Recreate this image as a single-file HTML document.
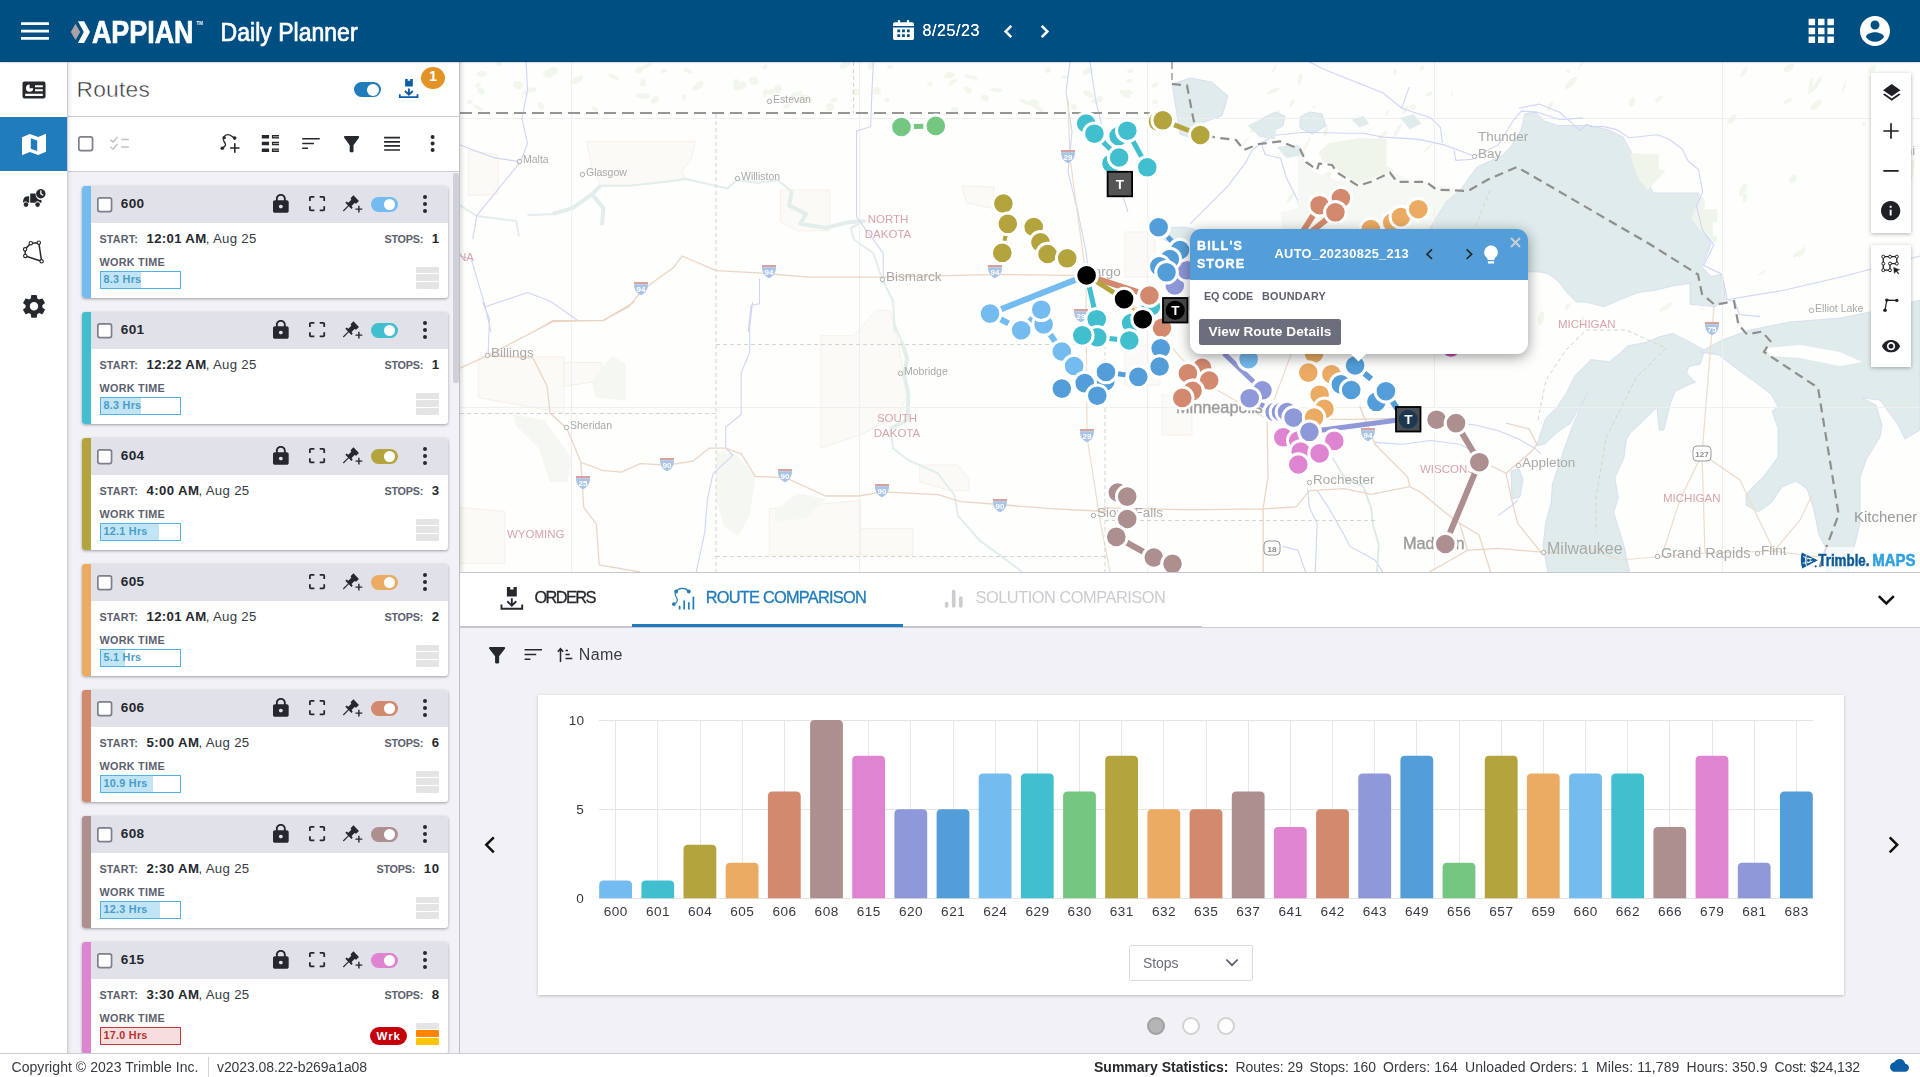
<!DOCTYPE html>
<html lang="en"><head><meta charset="utf-8"><title>Daily Planner</title>
<style>
*{box-sizing:border-box;margin:0;padding:0}
html,body{width:1920px;height:1077px;overflow:hidden;background:#f1f1f6;font-family:"Liberation Sans",sans-serif;color:#252a2e}
.abs{position:absolute}
#top{position:absolute;left:0;top:0;width:1920px;height:62px;background:#004f83;z-index:5;box-shadow:inset 0 -1px 0 #004477,0 0 2px rgba(0,0,30,.35)}
#nav{position:absolute;left:0;top:62px;width:68px;height:991px;background:#fff;border-right:1px solid #cbcdd6}
#nav .act{position:absolute;left:0;top:55px;width:67px;height:54px;background:#217cbb}
#routes{position:absolute;left:68px;top:62px;width:392px;height:991px;background:#f1f1f6;border-right:1px solid #bcbeca;overflow:hidden}
#rhead{position:absolute;left:0;top:0;width:391px;height:55px;background:#fff;border-bottom:1px solid #cbcdd6}
#rtool{position:absolute;left:0;top:55px;width:391px;height:55px;background:#fff;border-bottom:1px solid #cbcdd6}
.card{position:absolute;width:366px;height:112px;background:#fff;border-radius:3px;box-shadow:0 1px 3px rgba(0,0,0,.35);overflow:hidden}
.card .bar{position:absolute;left:0;top:0;width:9px;height:112px}
.card .hd{position:absolute;left:9px;top:0;width:357px;height:37px;background:#e0e1e9}
.cb{position:absolute;width:15px;height:15px;border:1.5px solid #7a7c8a;border-radius:2px;background:#fff}
.rid{position:absolute;left:39px;top:10px;font-weight:bold;font-size:13.6px;line-height:16px;color:#252a2e}
.lbl{position:absolute;font-size:10.6px;font-weight:bold;color:#5c5f6e;letter-spacing:.35px;line-height:12px}
.val{position:absolute;font-size:13px;line-height:16px;color:#363b42;white-space:nowrap}
.val b{color:#252a2e}
.wt{position:absolute;width:81px;height:18px;border:1px solid #4fb3e3;background:#fff}
.wt i{position:absolute;left:0;top:0;height:16px;background:#c1e5f4}
.wt span{position:absolute;left:2.6px;top:1px;font-size:10.8px;font-weight:bold;color:#4a9cc8;line-height:13px;white-space:nowrap}
.wt.red{border-color:#c23a3a;background:#f7dede}
.wt.red span{color:#b83232}
.stk{border-radius:1px;position:absolute;width:23px;background:#e4e4e4}
.tg{position:absolute;width:27px;height:15px;border-radius:8px}
.tg i{position:absolute;right:3.1px;top:2px;width:11px;height:11px;border-radius:50%;background:#fff}
#map{position:absolute;left:460px;top:62px;width:1460px;height:510px;background:#fefefd;overflow:hidden}
#bot{position:absolute;left:460px;top:573px;width:1460px;height:480px;background:#f1f1f6}
#tabs{position:absolute;left:0;top:-1px;width:1460px;height:56px;background:#fff;border-bottom:1px solid #c9cbd6;border-top:1px solid #c5c7d3}
#foot{position:absolute;left:0;top:1053px;width:1920px;height:24px;background:#fff;border-top:1px solid #cbcdd6;font-size:13.6px;color:#363b42}
svg{position:absolute;overflow:visible}
.t{position:absolute;white-space:nowrap;line-height:1}

</style></head>
<body>
<div id="top"><svg style="left:21px;top:22px" width="28" height="18" viewBox="0 0 28 18"><path fill="#fff" d="M0 .3h28v2.7H0zM0 7.7h28v2.7H0zM0 15.1h28v2.7H0z"/></svg><svg style="left:70px;top:21px" width="22" height="22" viewBox="70 21 22 22"><path fill="#aea3a3" d="M70.8 31.9l4.7-8.1 4.7 8.1-4.7 8.1z"/><path fill="#fff" d="M77.9 21.2h6.2l5.9 10.9-5.9 10.9h-6.2l5.9-10.9z"/></svg><svg style="left:0;top:0" width="420" height="62"><text x="91.900" y="42.700" font-family="Liberation Sans,sans-serif" font-weight="bold" font-size="31.200" fill="#fff" stroke="#fff" stroke-width=".7" textLength="101.600" lengthAdjust="spacingAndGlyphs">APPIAN</text><text x="196.5" y="24.6" font-family="Liberation Sans,sans-serif" font-weight="bold" font-size="4.6" fill="#fff" textLength="6.6" lengthAdjust="spacingAndGlyphs">TM</text><text x="220.600" y="40.600" font-family="Liberation Sans,sans-serif" font-size="24.9" fill="#fff" stroke="#fff" stroke-width=".7" textLength="137" lengthAdjust="spacingAndGlyphs">Daily Planner</text></svg><svg style="left:893px;top:20px" width="21" height="20" viewBox="0 0 21 20"><path fill="#fff" fill-rule="evenodd" d="M1.8 2.2h3V.6c0-.4.3-.6.7-.6h.9c.4 0 .7.2.7.6v1.6h6.8V.6c0-.4.3-.6.7-.6h.9c.4 0 .7.2.7.6v1.6h3c1 0 1.800.8 1.800 1.800V6H0V4c0-1 .8-1.800 1.800-1.800zM0 7.400h21V18.200c0 1-.8 1.800-1.800 1.800H1.800C.8 20 0 19.200 0 18.200zM4.300 9.600v2.700h2.800V9.600zm4.800 0v2.700h2.800V9.600zm4.800 0v2.700h2.800V9.600zM4.300 14.200v2.700h2.800v-2.700zm4.800 0v2.700h2.800v-2.700zm4.800 0v2.700h2.800v-2.700z"/></svg><span class="t" style="left:922.6px;top:23.1px;font-size:16.00px;color:#fff;letter-spacing:0.588px;text-shadow:0 0 .6px #fff;">8/25/23</span><svg style="left:1000px;top:20px" width="60" height="24" viewBox="1000 20 60 24"><path fill="none" stroke="#fff" stroke-width="2.5" d="M1011.3 25.900l-5.700 5.600 5.700 5.600M1041.700 25.900l5.700 5.600-5.700 5.600"/></svg><svg style="left:1800px;top:10px" width="40" height="40" viewBox="1800 10 40 40"><path fill="#fff" d="M1808.6 18.8h6.5v6.5h-6.5zM1818.0 18.8h6.5v6.5h-6.5zM1827.4 18.8h6.5v6.5h-6.5zM1808.6 27.7h6.5v6.5h-6.5zM1818.0 27.7h6.5v6.5h-6.5zM1827.4 27.7h6.5v6.5h-6.5zM1808.6 36.6h6.5v6.5h-6.5zM1818.0 36.6h6.5v6.5h-6.5zM1827.4 36.6h6.5v6.5h-6.5z"/></svg><svg style="left:1857.1px;top:12.9px" width="36.0" height="36.0" viewBox="0 0 24 24" preserveAspectRatio="none"><path fill="#fff" d="M12 2C6.48 2 2 6.48 2 12s4.48 10 10 10 10-4.48 10-10S17.52 2 12 2zm0 3c1.66 0 3 1.34 3 3s-1.34 3-3 3-3-1.34-3-3 1.34-3 3-3zm0 14.2c-2.5 0-4.71-1.28-6-3.22.03-1.99 4-3.08 6-3.08 1.99 0 5.97 1.09 6 3.08-1.29 1.94-3.5 3.22-6 3.22z" /></svg></div>
<div id="nav"><div class="act"></div></div><svg style="left:22px;top:81px" width="24" height="19" viewBox="0 0 24 19"><path fill="#25292e" fill-rule="evenodd" d="M2.400 .5h19.200c1.100 0 1.900.8 1.900 1.900v13.200c0 1.100-.8 1.900-1.900 1.900H2.400c-1.100 0-1.900-.8-1.900-1.900V2.400C.5 1.300 1.300.5 2.400.5zM3.200 12.700v2.200h17.600v-2.200zM13 4.200v2.100h7.800V4.200zM13 8.200v2.100h7.800V8.200zM7.600 3.600a3.600 3.600 0 1 0 3.600 3.600H7.600z"/></svg><svg style="left:22px;top:133px" width="24" height="23" viewBox="0 0 24 23"><path fill="#fff" fill-rule="evenodd" d="M0 4.300L7.800 1l8.400 3L24 .7v18L16.200 22l-8.400-3L0 22.300zM8.800 5.300v10.400l6.400 2.300V7.600z"/></svg><svg style="left:22px;top:189px" width="24" height="19" viewBox="0 0 24 19"><path fill="#25292e" d="M1 13.500c0-3.500 1.500-6.300 4.600-6.300h1.600v6.600H5.900a2.600 2.600 0 0 0-4.600 0zM8.200 4.600h5.400a5.800 5.800 0 0 0 5.900 6.500v2.700h-1.500a2.600 2.600 0 0 0-4.700 0H8.200z"/><circle cx="4" cy="15.600" r="2.300" fill="#25292e"/><circle cx="15.600" cy="15.600" r="2.300" fill="#25292e"/><path fill="#25292e" fill-rule="evenodd" d="M18.800 0a4.700 4.700 0 1 0 .01 0zM18.200 1.600h1.300v3l2 1.200-.6 1-2.700-1.500z"/></svg><svg style="left:22px;top:240px" width="25" height="25" viewBox="0 0 25 25"><path fill="none" stroke="#25292e" stroke-width="1.500" d="M8.800 3.200l8-.5 2.800 18.600-16.300-5.400-.2-6.600z"/><g fill="#fff" stroke="#25292e" stroke-width="1.100"><circle cx="8.800" cy="3.200" r="1.700"/><circle cx="16.800" cy="2.700" r="1.700"/><circle cx="19.600" cy="21.300" r="1.700"/><circle cx="3.300" cy="15.900" r="1.700"/><circle cx="3.100" cy="9.300" r="1.700"/></g></svg><svg style="left:23.0px;top:295.3px" width="22.0" height="22.7" viewBox="2.6 2.4 18.8 19.2" preserveAspectRatio="none"><path fill="#25292e" d="M19.14 12.94c.04-.3.06-.61.06-.94 0-.32-.02-.64-.07-.94l2.03-1.58c.18-.14.23-.41.12-.61l-1.92-3.32c-.12-.22-.37-.29-.59-.22l-2.39.96c-.5-.38-1.03-.7-1.62-.94l-.36-2.54c-.04-.24-.24-.41-.48-.41h-3.84c-.24 0-.43.17-.47.41l-.36 2.54c-.59.24-1.13.57-1.62.94l-2.39-.96c-.22-.08-.47 0-.59.22L2.74 8.87c-.12.21-.08.47.12.61l2.03 1.58c-.05.3-.09.63-.09.94s.02.64.07.94l-2.03 1.58c-.18.14-.23.41-.12.61l1.92 3.32c.12.22.37.29.59.22l2.39-.96c.5.38 1.03.7 1.62.94l.36 2.54c.05.24.24.41.48.41h3.84c.24 0 .44-.17.47-.41l.36-2.54c.59-.24 1.13-.56 1.62-.94l2.39.96c.22.08.47 0 .59-.22l1.92-3.32c.12-.22.07-.47-.12-.61l-2.01-1.58zM12 15.6c-1.98 0-3.6-1.62-3.6-3.6s1.62-3.6 3.6-3.6 3.6 1.62 3.6 3.6-1.62 3.6-3.6 3.6z" /></svg><div id="routes"><div id="rhead"></div><div id="rtool"></div><div class="abs" style="left:385.2px;top:110.5px;width:5.8px;height:210px;border-radius:2.5px;background:#cfd0d8"></div></div><div class="abs" style="left:68px;top:62px;width:4px;height:991px;background:linear-gradient(90deg,rgba(0,0,20,.07),rgba(0,0,0,0))"></div><span class="t" style="left:76.5px;top:78.2px;font-size:22.80px;color:#2f3338;letter-spacing:0.210px;-webkit-text-stroke:.5px #fff;">Routes</span><div class="tg" style="left:354px;top:82px;background:#217cbb"><i style="width:12px;height:12px;top:1.500px;right:2px"></i></div><svg style="left:398px;top:78px" width="22" height="22" viewBox="398 78 22 22"><path fill="#0b5ea6" d="M405.100 78.900h2.600v1.800h2.500v-1.800h2.600v7.600h-7.700z"/><path fill="none" stroke="#0b5ea6" stroke-width="1.800" d="M408.900 88.600v5.800M405 91l3.900 3.700 3.900-3.700M399.800 94.200v2.900h17.700v-2.900"/></svg><div class="abs" style="left:421px;top:66.900px;width:24px;height:22px;border-radius:50%;background:#e39325"></div><span class="t" style="left:428.9px;top:69.4px;font-size:14.50px;font-weight:bold;color:#fff;">1</span><svg style="left:78.1px;top:136.2px" width="16" height="16" viewBox="0 0 16 16"><rect x=".85" y=".85" width="13.700" height="13.700" rx="2" fill="#fff" stroke="#7d7f8d" stroke-width="1.700"/></svg><svg style="left:110px;top:136px" width="20" height="15" viewBox="110 136 20 15"><path fill="none" stroke="#c4c4c8" stroke-width="1.500" d="M110.400 139.600l2.600 2.500 4.600-5.200M110.400 146.700l2.600 2.500 4.600-5.200M121.200 139.600h7.700M121.200 147h7.700"/></svg><svg style="left:220px;top:134px" width="21" height="20" viewBox="220 134 21 20"><path fill="none" stroke="#25292e" stroke-width="1.300" d="M222.500 148c4-2 3.500-4 1.500-6.500s0-7 4-6.800c3 .2 4.500 2.300 6.300 3.300"/><circle cx="222.300" cy="148.300" r="1.800" fill="#25292e"/><circle cx="224.200" cy="137.600" r="1.700" fill="#25292e"/><circle cx="234.700" cy="138.100" r="1.800" fill="#25292e"/><path fill="none" stroke="#25292e" stroke-width="1.600" d="M234.800 143.300v9.400M230.100 148h9.400"/></svg><svg style="left:261px;top:134px" width="19" height="19" viewBox="261 134 19 19"><path fill="#25292e" d="M261.800 135.00h7.300v3.500h-7.300zM271.900 135.00h7.100v3.500h-7.100zM261.800 141.75h7.300v3.500h-7.300zM271.900 141.75h7.100v3.500h-7.100zM261.800 148.50h7.300v3.500h-7.300zM271.900 148.50h7.100v3.500h-7.100z"/><path stroke="#fff" stroke-width=".600" d="M273 136.700h6M273 143.500h6M273 150.200h6"/></svg><svg style="left:302px;top:137px" width="19" height="13" viewBox="302 137 19 13"><path fill="none" stroke="#25292e" stroke-width="1.500" d="M302.200 138.800h17.600M302.200 143.500h11.700M302.200 148.200h5.900"/></svg><svg style="left:343.9px;top:136.0px" width="15.2" height="16.2" viewBox="4.03 4 15.93 16" preserveAspectRatio="none"><path fill="#25292e" d="M4.25 5.61C6.27 8.2 10 13 10 13v6c0 .55.45 1 1 1h2c.55 0 1-.45 1-1v-6s3.72-4.8 5.74-7.39A.998.998 0 0 0 18.95 4H5.04c-.83 0-1.3.95-.79 1.61z" /></svg><svg style="left:384px;top:136px" width="16" height="15" viewBox="384 136 16 15"><path fill="none" stroke="#25292e" stroke-width="1.700" d="M384.100 137.700h15.900M384.100 141.800h15.900M384.100 145.900h15.900M384.100 150h15.900" transform="translate(0,0)"/></svg><svg style="left:428px;top:134px" width="9" height="19" viewBox="428 134 9 19"><g fill="#25292e"><circle cx="432.600" cy="136.900" r="2"/><circle cx="432.600" cy="143.400" r="2"/><circle cx="432.600" cy="150" r="2"/></g></svg><div class="card" style="left:82px;top:186px"><div class="bar" style="background:#74bbf0"></div><div class="hd"></div></div><svg style="left:97.3px;top:197.1px" width="16" height="16" viewBox="0 0 16 16"><rect x=".85" y=".85" width="13.700" height="13.700" rx="2" fill="#fff" stroke="#7d7f8d" stroke-width="1.700"/></svg><span class="t" style="left:120.8px;top:197.4px;font-size:13.60px;font-weight:bold;color:#25292e;letter-spacing:0.303px;">600</span><svg style="left:273.0px;top:194.0px" width="15.7" height="18.8" viewBox="4 1 16 21" preserveAspectRatio="none"><path fill="#25292e" d="M18 8h-1V6c0-2.76-2.24-5-5-5S7 3.24 7 6v2H6c-1.1 0-2 .9-2 2v10c0 1.1.9 2 2 2h12c1.1 0 2-.9 2-2V10c0-1.1-.9-2-2-2zm-6 9c-1.1 0-2-.9-2-2s.9-2 2-2 2 .9 2 2-.9 2-2 2zm3.1-9H8.9V6c0-1.71 1.39-3.1 3.1-3.1 1.71 0 3.1 1.39 3.1 3.1v2z" /></svg><svg style="left:308.9px;top:196.0px" width="16.1" height="15.2" viewBox="3 3 18 18" preserveAspectRatio="none"><path fill="#25292e" d="M3 5v4h2V5h4V3H5c-1.1 0-2 .9-2 2zm2 10H3v4c0 1.1.9 2 2 2h4v-2H5v-4zm14 4h-4v2h4c1.1 0 2-.9 2-2v-4h-2v4zm0-16h-4v2h4v4h2V5c0-1.1-.9-2-2-2z" /></svg><svg style="left:343px;top:195px" width="21" height="19" viewBox="343 195 21 19"><path fill="#25292e" d="M343.69 211.39 348.78 206.30 351.43 208.95 352.70 207.68 351.57 205.98 354.54 203.01 356.10 203.72 358.93 200.89 353.41 195.37 350.58 198.20 351.29 199.76 348.32 202.73 346.62 201.60 345.35 202.87 348.00 205.52 342.91 210.61z"/><path fill="none" stroke="#25292e" stroke-width="1.4" d="M358.9 205.7v6.8M355.5 209.1h6.8"/></svg><div class="tg" style="left:371px;top:197px;background:#74bbf0"><i></i></div><svg style="left:421px;top:194px" width="9" height="19" viewBox="421 194 9 19"><g fill="#25292e"><circle cx="425" cy="196.900" r="2"/><circle cx="425" cy="204" r="2"/><circle cx="425" cy="211.100" r="2"/></g></svg><span class="t" style="left:99.5px;top:233.6px;font-size:10.80px;font-weight:bold;color:#5c5f6e;letter-spacing:0.151px;">START:</span><span class="t" style="left:146.5px;top:231.5px;font-size:13.20px;font-weight:bold;color:#25292e;letter-spacing:0.317px;">12:01 AM</span><span class="t" style="left:205.7px;top:231.5px;font-size:13.20px;color:#363b42;letter-spacing:0.320px;">, Aug 25</span><span class="t" style="left:431.8px;top:231.5px;font-size:13.20px;font-weight:bold;color:#25292e;letter-spacing:0.600px;">1</span><span class="t" style="left:384.4px;top:233.6px;font-size:10.80px;font-weight:bold;color:#5c5f6e;letter-spacing:-0.202px;">STOPS:</span><span class="t" style="left:99.5px;top:256.8px;font-size:10.80px;font-weight:bold;color:#5c5f6e;letter-spacing:0.279px;">WORK TIME</span><div class="wt" style="left:100px;top:271px"><i style="width:39.5px"></i><span style="letter-spacing:.25px">8.3 Hrs</span></div><div class="stk" style="left:416px;top:267px;height:6px"></div><div class="stk" style="left:416px;top:274px;height:7px"></div><div class="stk" style="left:416px;top:282px;height:7px"></div><div class="card" style="left:82px;top:312px"><div class="bar" style="background:#41bfce"></div><div class="hd"></div></div><svg style="left:97.3px;top:323.1px" width="16" height="16" viewBox="0 0 16 16"><rect x=".85" y=".85" width="13.700" height="13.700" rx="2" fill="#fff" stroke="#7d7f8d" stroke-width="1.700"/></svg><span class="t" style="left:120.8px;top:323.4px;font-size:13.60px;font-weight:bold;color:#25292e;letter-spacing:0.303px;">601</span><svg style="left:273.0px;top:320.0px" width="15.7" height="18.8" viewBox="4 1 16 21" preserveAspectRatio="none"><path fill="#25292e" d="M18 8h-1V6c0-2.76-2.24-5-5-5S7 3.24 7 6v2H6c-1.1 0-2 .9-2 2v10c0 1.1.9 2 2 2h12c1.1 0 2-.9 2-2V10c0-1.1-.9-2-2-2zm-6 9c-1.1 0-2-.9-2-2s.9-2 2-2 2 .9 2 2-.9 2-2 2zm3.1-9H8.9V6c0-1.71 1.39-3.1 3.1-3.1 1.71 0 3.1 1.39 3.1 3.1v2z" /></svg><svg style="left:308.9px;top:322.0px" width="16.1" height="15.2" viewBox="3 3 18 18" preserveAspectRatio="none"><path fill="#25292e" d="M3 5v4h2V5h4V3H5c-1.1 0-2 .9-2 2zm2 10H3v4c0 1.1.9 2 2 2h4v-2H5v-4zm14 4h-4v2h4c1.1 0 2-.9 2-2v-4h-2v4zm0-16h-4v2h4v4h2V5c0-1.1-.9-2-2-2z" /></svg><svg style="left:343px;top:321px" width="21" height="19" viewBox="343 195 21 19"><path fill="#25292e" d="M343.69 211.39 348.78 206.30 351.43 208.95 352.70 207.68 351.57 205.98 354.54 203.01 356.10 203.72 358.93 200.89 353.41 195.37 350.58 198.20 351.29 199.76 348.32 202.73 346.62 201.60 345.35 202.87 348.00 205.52 342.91 210.61z"/><path fill="none" stroke="#25292e" stroke-width="1.4" d="M358.9 205.7v6.8M355.5 209.1h6.8"/></svg><div class="tg" style="left:371px;top:323px;background:#41bfce"><i></i></div><svg style="left:421px;top:320px" width="9" height="19" viewBox="421 194 9 19"><g fill="#25292e"><circle cx="425" cy="196.900" r="2"/><circle cx="425" cy="204" r="2"/><circle cx="425" cy="211.100" r="2"/></g></svg><span class="t" style="left:99.5px;top:359.6px;font-size:10.80px;font-weight:bold;color:#5c5f6e;letter-spacing:0.151px;">START:</span><span class="t" style="left:146.5px;top:357.5px;font-size:13.20px;font-weight:bold;color:#25292e;letter-spacing:0.317px;">12:22 AM</span><span class="t" style="left:205.7px;top:357.5px;font-size:13.20px;color:#363b42;letter-spacing:0.320px;">, Aug 25</span><span class="t" style="left:431.8px;top:357.5px;font-size:13.20px;font-weight:bold;color:#25292e;letter-spacing:0.600px;">1</span><span class="t" style="left:384.4px;top:359.6px;font-size:10.80px;font-weight:bold;color:#5c5f6e;letter-spacing:-0.202px;">STOPS:</span><span class="t" style="left:99.5px;top:382.8px;font-size:10.80px;font-weight:bold;color:#5c5f6e;letter-spacing:0.279px;">WORK TIME</span><div class="wt" style="left:100px;top:397px"><i style="width:39.5px"></i><span style="letter-spacing:.25px">8.3 Hrs</span></div><div class="stk" style="left:416px;top:393px;height:6px"></div><div class="stk" style="left:416px;top:400px;height:7px"></div><div class="stk" style="left:416px;top:408px;height:7px"></div><div class="card" style="left:82px;top:438px"><div class="bar" style="background:#b3a43e"></div><div class="hd"></div></div><svg style="left:97.3px;top:449.1px" width="16" height="16" viewBox="0 0 16 16"><rect x=".85" y=".85" width="13.700" height="13.700" rx="2" fill="#fff" stroke="#7d7f8d" stroke-width="1.700"/></svg><span class="t" style="left:120.8px;top:449.4px;font-size:13.60px;font-weight:bold;color:#25292e;letter-spacing:0.303px;">604</span><svg style="left:273.0px;top:446.0px" width="15.7" height="18.8" viewBox="4 1 16 21" preserveAspectRatio="none"><path fill="#25292e" d="M18 8h-1V6c0-2.76-2.24-5-5-5S7 3.24 7 6v2H6c-1.1 0-2 .9-2 2v10c0 1.1.9 2 2 2h12c1.1 0 2-.9 2-2V10c0-1.1-.9-2-2-2zm-6 9c-1.1 0-2-.9-2-2s.9-2 2-2 2 .9 2 2-.9 2-2 2zm3.1-9H8.9V6c0-1.71 1.39-3.1 3.1-3.1 1.71 0 3.1 1.39 3.1 3.1v2z" /></svg><svg style="left:308.9px;top:448.0px" width="16.1" height="15.2" viewBox="3 3 18 18" preserveAspectRatio="none"><path fill="#25292e" d="M3 5v4h2V5h4V3H5c-1.1 0-2 .9-2 2zm2 10H3v4c0 1.1.9 2 2 2h4v-2H5v-4zm14 4h-4v2h4c1.1 0 2-.9 2-2v-4h-2v4zm0-16h-4v2h4v4h2V5c0-1.1-.9-2-2-2z" /></svg><svg style="left:343px;top:447px" width="21" height="19" viewBox="343 195 21 19"><path fill="#25292e" d="M343.69 211.39 348.78 206.30 351.43 208.95 352.70 207.68 351.57 205.98 354.54 203.01 356.10 203.72 358.93 200.89 353.41 195.37 350.58 198.20 351.29 199.76 348.32 202.73 346.62 201.60 345.35 202.87 348.00 205.52 342.91 210.61z"/><path fill="none" stroke="#25292e" stroke-width="1.4" d="M358.9 205.7v6.8M355.5 209.1h6.8"/></svg><div class="tg" style="left:371px;top:449px;background:#b3a43e"><i></i></div><svg style="left:421px;top:446px" width="9" height="19" viewBox="421 194 9 19"><g fill="#25292e"><circle cx="425" cy="196.900" r="2"/><circle cx="425" cy="204" r="2"/><circle cx="425" cy="211.100" r="2"/></g></svg><span class="t" style="left:99.5px;top:485.6px;font-size:10.80px;font-weight:bold;color:#5c5f6e;letter-spacing:0.151px;">START:</span><span class="t" style="left:146.5px;top:483.5px;font-size:13.20px;font-weight:bold;color:#25292e;letter-spacing:0.382px;">4:00 AM</span><span class="t" style="left:198.5px;top:483.5px;font-size:13.20px;color:#363b42;letter-spacing:0.320px;">, Aug 25</span><span class="t" style="left:431.8px;top:483.5px;font-size:13.20px;font-weight:bold;color:#25292e;letter-spacing:0.600px;">3</span><span class="t" style="left:384.4px;top:485.6px;font-size:10.80px;font-weight:bold;color:#5c5f6e;letter-spacing:-0.202px;">STOPS:</span><span class="t" style="left:99.5px;top:508.8px;font-size:10.80px;font-weight:bold;color:#5c5f6e;letter-spacing:0.279px;">WORK TIME</span><div class="wt" style="left:100px;top:523px"><i style="width:57.6px"></i><span style="letter-spacing:.25px">12.1 Hrs</span></div><div class="stk" style="left:416px;top:519px;height:6px"></div><div class="stk" style="left:416px;top:526px;height:7px"></div><div class="stk" style="left:416px;top:534px;height:7px"></div><div class="card" style="left:82px;top:564px"><div class="bar" style="background:#ebab63"></div><div class="hd"></div></div><svg style="left:97.3px;top:575.1px" width="16" height="16" viewBox="0 0 16 16"><rect x=".85" y=".85" width="13.700" height="13.700" rx="2" fill="#fff" stroke="#7d7f8d" stroke-width="1.700"/></svg><span class="t" style="left:120.8px;top:575.4px;font-size:13.60px;font-weight:bold;color:#25292e;letter-spacing:0.303px;">605</span><svg style="left:308.9px;top:574.0px" width="16.1" height="15.2" viewBox="3 3 18 18" preserveAspectRatio="none"><path fill="#25292e" d="M3 5v4h2V5h4V3H5c-1.1 0-2 .9-2 2zm2 10H3v4c0 1.1.9 2 2 2h4v-2H5v-4zm14 4h-4v2h4c1.1 0 2-.9 2-2v-4h-2v4zm0-16h-4v2h4v4h2V5c0-1.1-.9-2-2-2z" /></svg><svg style="left:343px;top:573px" width="21" height="19" viewBox="343 195 21 19"><path fill="#25292e" d="M343.69 211.39 348.78 206.30 351.43 208.95 352.70 207.68 351.57 205.98 354.54 203.01 356.10 203.72 358.93 200.89 353.41 195.37 350.58 198.20 351.29 199.76 348.32 202.73 346.62 201.60 345.35 202.87 348.00 205.52 342.91 210.61z"/><path fill="none" stroke="#25292e" stroke-width="1.4" d="M358.9 205.7v6.8M355.5 209.1h6.8"/></svg><div class="tg" style="left:371px;top:575px;background:#ebab63"><i></i></div><svg style="left:421px;top:572px" width="9" height="19" viewBox="421 194 9 19"><g fill="#25292e"><circle cx="425" cy="196.900" r="2"/><circle cx="425" cy="204" r="2"/><circle cx="425" cy="211.100" r="2"/></g></svg><span class="t" style="left:99.5px;top:611.6px;font-size:10.80px;font-weight:bold;color:#5c5f6e;letter-spacing:0.151px;">START:</span><span class="t" style="left:146.5px;top:609.5px;font-size:13.20px;font-weight:bold;color:#25292e;letter-spacing:0.317px;">12:01 AM</span><span class="t" style="left:205.7px;top:609.5px;font-size:13.20px;color:#363b42;letter-spacing:0.320px;">, Aug 25</span><span class="t" style="left:431.8px;top:609.5px;font-size:13.20px;font-weight:bold;color:#25292e;letter-spacing:0.600px;">2</span><span class="t" style="left:384.4px;top:611.6px;font-size:10.80px;font-weight:bold;color:#5c5f6e;letter-spacing:-0.202px;">STOPS:</span><span class="t" style="left:99.5px;top:634.8px;font-size:10.80px;font-weight:bold;color:#5c5f6e;letter-spacing:0.279px;">WORK TIME</span><div class="wt" style="left:100px;top:649px"><i style="width:24.3px"></i><span style="letter-spacing:.25px">5.1 Hrs</span></div><div class="stk" style="left:416px;top:645px;height:6px"></div><div class="stk" style="left:416px;top:652px;height:7px"></div><div class="stk" style="left:416px;top:660px;height:7px"></div><div class="card" style="left:82px;top:690px"><div class="bar" style="background:#d2896d"></div><div class="hd"></div></div><svg style="left:97.3px;top:701.1px" width="16" height="16" viewBox="0 0 16 16"><rect x=".85" y=".85" width="13.700" height="13.700" rx="2" fill="#fff" stroke="#7d7f8d" stroke-width="1.700"/></svg><span class="t" style="left:120.8px;top:701.4px;font-size:13.60px;font-weight:bold;color:#25292e;letter-spacing:0.303px;">606</span><svg style="left:273.0px;top:698.0px" width="15.7" height="18.8" viewBox="4 1 16 21" preserveAspectRatio="none"><path fill="#25292e" d="M18 8h-1V6c0-2.76-2.24-5-5-5S7 3.24 7 6v2H6c-1.1 0-2 .9-2 2v10c0 1.1.9 2 2 2h12c1.1 0 2-.9 2-2V10c0-1.1-.9-2-2-2zm-6 9c-1.1 0-2-.9-2-2s.9-2 2-2 2 .9 2 2-.9 2-2 2zm3.1-9H8.9V6c0-1.71 1.39-3.1 3.1-3.1 1.71 0 3.1 1.39 3.1 3.1v2z" /></svg><svg style="left:308.9px;top:700.0px" width="16.1" height="15.2" viewBox="3 3 18 18" preserveAspectRatio="none"><path fill="#25292e" d="M3 5v4h2V5h4V3H5c-1.1 0-2 .9-2 2zm2 10H3v4c0 1.1.9 2 2 2h4v-2H5v-4zm14 4h-4v2h4c1.1 0 2-.9 2-2v-4h-2v4zm0-16h-4v2h4v4h2V5c0-1.1-.9-2-2-2z" /></svg><svg style="left:343px;top:699px" width="21" height="19" viewBox="343 195 21 19"><path fill="#25292e" d="M343.69 211.39 348.78 206.30 351.43 208.95 352.70 207.68 351.57 205.98 354.54 203.01 356.10 203.72 358.93 200.89 353.41 195.37 350.58 198.20 351.29 199.76 348.32 202.73 346.62 201.60 345.35 202.87 348.00 205.52 342.91 210.61z"/><path fill="none" stroke="#25292e" stroke-width="1.4" d="M358.9 205.7v6.8M355.5 209.1h6.8"/></svg><div class="tg" style="left:371px;top:701px;background:#d2896d"><i></i></div><svg style="left:421px;top:698px" width="9" height="19" viewBox="421 194 9 19"><g fill="#25292e"><circle cx="425" cy="196.900" r="2"/><circle cx="425" cy="204" r="2"/><circle cx="425" cy="211.100" r="2"/></g></svg><span class="t" style="left:99.5px;top:737.6px;font-size:10.80px;font-weight:bold;color:#5c5f6e;letter-spacing:0.151px;">START:</span><span class="t" style="left:146.5px;top:735.5px;font-size:13.20px;font-weight:bold;color:#25292e;letter-spacing:0.382px;">5:00 AM</span><span class="t" style="left:198.5px;top:735.5px;font-size:13.20px;color:#363b42;letter-spacing:0.320px;">, Aug 25</span><span class="t" style="left:431.8px;top:735.5px;font-size:13.20px;font-weight:bold;color:#25292e;letter-spacing:0.600px;">6</span><span class="t" style="left:384.4px;top:737.6px;font-size:10.80px;font-weight:bold;color:#5c5f6e;letter-spacing:-0.202px;">STOPS:</span><span class="t" style="left:99.5px;top:760.8px;font-size:10.80px;font-weight:bold;color:#5c5f6e;letter-spacing:0.279px;">WORK TIME</span><div class="wt" style="left:100px;top:775px"><i style="width:51.9px"></i><span style="letter-spacing:.25px">10.9 Hrs</span></div><div class="stk" style="left:416px;top:771px;height:6px"></div><div class="stk" style="left:416px;top:778px;height:7px"></div><div class="stk" style="left:416px;top:786px;height:7px"></div><div class="card" style="left:82px;top:816px"><div class="bar" style="background:#ae8f8f"></div><div class="hd"></div></div><svg style="left:97.3px;top:827.1px" width="16" height="16" viewBox="0 0 16 16"><rect x=".85" y=".85" width="13.700" height="13.700" rx="2" fill="#fff" stroke="#7d7f8d" stroke-width="1.700"/></svg><span class="t" style="left:120.8px;top:827.4px;font-size:13.60px;font-weight:bold;color:#25292e;letter-spacing:0.303px;">608</span><svg style="left:273.0px;top:824.0px" width="15.7" height="18.8" viewBox="4 1 16 21" preserveAspectRatio="none"><path fill="#25292e" d="M18 8h-1V6c0-2.76-2.24-5-5-5S7 3.24 7 6v2H6c-1.1 0-2 .9-2 2v10c0 1.1.9 2 2 2h12c1.1 0 2-.9 2-2V10c0-1.1-.9-2-2-2zm-6 9c-1.1 0-2-.9-2-2s.9-2 2-2 2 .9 2 2-.9 2-2 2zm3.1-9H8.9V6c0-1.71 1.39-3.1 3.1-3.1 1.71 0 3.1 1.39 3.1 3.1v2z" /></svg><svg style="left:308.9px;top:826.0px" width="16.1" height="15.2" viewBox="3 3 18 18" preserveAspectRatio="none"><path fill="#25292e" d="M3 5v4h2V5h4V3H5c-1.1 0-2 .9-2 2zm2 10H3v4c0 1.1.9 2 2 2h4v-2H5v-4zm14 4h-4v2h4c1.1 0 2-.9 2-2v-4h-2v4zm0-16h-4v2h4v4h2V5c0-1.1-.9-2-2-2z" /></svg><svg style="left:343px;top:825px" width="21" height="19" viewBox="343 195 21 19"><path fill="#25292e" d="M343.69 211.39 348.78 206.30 351.43 208.95 352.70 207.68 351.57 205.98 354.54 203.01 356.10 203.72 358.93 200.89 353.41 195.37 350.58 198.20 351.29 199.76 348.32 202.73 346.62 201.60 345.35 202.87 348.00 205.52 342.91 210.61z"/><path fill="none" stroke="#25292e" stroke-width="1.4" d="M358.9 205.7v6.8M355.5 209.1h6.8"/></svg><div class="tg" style="left:371px;top:827px;background:#ae8f8f"><i></i></div><svg style="left:421px;top:824px" width="9" height="19" viewBox="421 194 9 19"><g fill="#25292e"><circle cx="425" cy="196.900" r="2"/><circle cx="425" cy="204" r="2"/><circle cx="425" cy="211.100" r="2"/></g></svg><span class="t" style="left:99.5px;top:863.6px;font-size:10.80px;font-weight:bold;color:#5c5f6e;letter-spacing:0.151px;">START:</span><span class="t" style="left:146.5px;top:861.5px;font-size:13.20px;font-weight:bold;color:#25292e;letter-spacing:0.382px;">2:30 AM</span><span class="t" style="left:198.5px;top:861.5px;font-size:13.20px;color:#363b42;letter-spacing:0.320px;">, Aug 25</span><span class="t" style="left:423.8px;top:861.5px;font-size:13.20px;font-weight:bold;color:#25292e;letter-spacing:0.600px;">10</span><span class="t" style="left:376.4px;top:863.6px;font-size:10.80px;font-weight:bold;color:#5c5f6e;letter-spacing:-0.202px;">STOPS:</span><span class="t" style="left:99.5px;top:886.8px;font-size:10.80px;font-weight:bold;color:#5c5f6e;letter-spacing:0.279px;">WORK TIME</span><div class="wt" style="left:100px;top:901px"><i style="width:58.5px"></i><span style="letter-spacing:.25px">12.3 Hrs</span></div><div class="stk" style="left:416px;top:897px;height:6px"></div><div class="stk" style="left:416px;top:904px;height:7px"></div><div class="stk" style="left:416px;top:912px;height:7px"></div><div class="card" style="left:82px;top:942px"><div class="bar" style="background:#df84d1"></div><div class="hd"></div></div><svg style="left:97.3px;top:953.1px" width="16" height="16" viewBox="0 0 16 16"><rect x=".85" y=".85" width="13.700" height="13.700" rx="2" fill="#fff" stroke="#7d7f8d" stroke-width="1.700"/></svg><span class="t" style="left:120.8px;top:953.4px;font-size:13.60px;font-weight:bold;color:#25292e;letter-spacing:0.303px;">615</span><svg style="left:273.0px;top:950.0px" width="15.7" height="18.8" viewBox="4 1 16 21" preserveAspectRatio="none"><path fill="#25292e" d="M18 8h-1V6c0-2.76-2.24-5-5-5S7 3.24 7 6v2H6c-1.1 0-2 .9-2 2v10c0 1.1.9 2 2 2h12c1.1 0 2-.9 2-2V10c0-1.1-.9-2-2-2zm-6 9c-1.1 0-2-.9-2-2s.9-2 2-2 2 .9 2 2-.9 2-2 2zm3.1-9H8.9V6c0-1.71 1.39-3.1 3.1-3.1 1.71 0 3.1 1.39 3.1 3.1v2z" /></svg><svg style="left:308.9px;top:952.0px" width="16.1" height="15.2" viewBox="3 3 18 18" preserveAspectRatio="none"><path fill="#25292e" d="M3 5v4h2V5h4V3H5c-1.1 0-2 .9-2 2zm2 10H3v4c0 1.1.9 2 2 2h4v-2H5v-4zm14 4h-4v2h4c1.1 0 2-.9 2-2v-4h-2v4zm0-16h-4v2h4v4h2V5c0-1.1-.9-2-2-2z" /></svg><svg style="left:343px;top:951px" width="21" height="19" viewBox="343 195 21 19"><path fill="#25292e" d="M343.69 211.39 348.78 206.30 351.43 208.95 352.70 207.68 351.57 205.98 354.54 203.01 356.10 203.72 358.93 200.89 353.41 195.37 350.58 198.20 351.29 199.76 348.32 202.73 346.62 201.60 345.35 202.87 348.00 205.52 342.91 210.61z"/><path fill="none" stroke="#25292e" stroke-width="1.4" d="M358.9 205.7v6.8M355.5 209.1h6.8"/></svg><div class="tg" style="left:371px;top:953px;background:#df84d1"><i></i></div><svg style="left:421px;top:950px" width="9" height="19" viewBox="421 194 9 19"><g fill="#25292e"><circle cx="425" cy="196.900" r="2"/><circle cx="425" cy="204" r="2"/><circle cx="425" cy="211.100" r="2"/></g></svg><span class="t" style="left:99.5px;top:989.6px;font-size:10.80px;font-weight:bold;color:#5c5f6e;letter-spacing:0.151px;">START:</span><span class="t" style="left:146.5px;top:987.5px;font-size:13.20px;font-weight:bold;color:#25292e;letter-spacing:0.382px;">3:30 AM</span><span class="t" style="left:198.5px;top:987.5px;font-size:13.20px;color:#363b42;letter-spacing:0.320px;">, Aug 25</span><span class="t" style="left:431.8px;top:987.5px;font-size:13.20px;font-weight:bold;color:#25292e;letter-spacing:0.600px;">8</span><span class="t" style="left:384.4px;top:989.6px;font-size:10.80px;font-weight:bold;color:#5c5f6e;letter-spacing:-0.202px;">STOPS:</span><span class="t" style="left:99.5px;top:1012.8px;font-size:10.80px;font-weight:bold;color:#5c5f6e;letter-spacing:0.279px;">WORK TIME</span><div class="wt red" style="left:100px;top:1027px"><span style="letter-spacing:.25px">17.0 Hrs</span></div><div class="abs" style="left:370px;top:1027px;width:37px;height:18px;border-radius:9px;background:#c4000b"></div><span class="t" style="left:376.5px;top:1030.6px;font-size:11.50px;font-weight:bold;color:#fff;letter-spacing:0.994px;">Wrk</span><div class="stk" style="left:416px;top:1023px;height:6px"></div><div class="stk" style="left:416px;top:1030px;height:7px;background:#ff8500"></div><div class="stk" style="left:416px;top:1038px;height:7px;background:#ffc40a"></div>
<div id="map"><svg style="left:-460px;top:-62px" width="1920" height="1077" viewBox="0 0 1920 1077" font-family="Liberation Sans,sans-serif"><g fill="#eef5e9"><path d="M1310 190l60-20 40 10 50 10 20 20-60 30-120 0z" opacity=".55"/></g><path fill="#fcfaf6" stroke="#f7f0e7" stroke-width="1" d="M586.5 141.6 695.7 141.6 690.6 160.4 682.2 170.3 685.0 180.1 628.7 185.7 600.6 185.7 592.2 168.9zM468.4 150.6 498.0 154.8 498.0 194.2 468.4 195.6zM780.6 190.0 829.8 190.0 829.8 230.7 797.5 230.7 780.6 222.3zM962.0 185.7 994.3 187.1 991.5 208.2 966.2 202.6zM820.8 335.7 853.7 335.7 876.2 310.4 890.3 310.4 898.7 344.2 907.1 394.8 898.7 414.5 862.1 434.2 820.8 448.2zM769.3 508.7 860.7 500.3 860.7 555.1 769.3 555.1zM860.7 528.4 912.8 528.4 912.8 555.1 860.7 555.1zM478.3 356.8 564.0 356.8 564.0 413.1 478.3 397.6zM564.0 362.5 602.0 362.5 602.0 380.7 564.0 386.4zM460.0 507.3 505.0 511.5 505.0 563.5 460.0 563.5zM919.8 465.1 957.8 465.1 969.0 479.2 969.0 490.4 949.3 490.4 919.8 482.0z"/><rect x="1125" y="345" width="35" height="40" fill="#fcfaf6" stroke="#f7f0e7"/><rect x="1162" y="395" width="30" height="40" fill="#fcfaf6" stroke="#f7f0e7"/><rect x="1210" y="290" width="60" height="45" fill="#fcfaf6" stroke="#f7f0e7"/><rect x="1125" y="232" width="30" height="45" fill="#fcfaf6" stroke="#f7f0e7"/><rect x="1212" y="232" width="55" height="40" fill="#fcfaf6" stroke="#f7f0e7"/><path fill="#f4f8f1" d="M513.4 414.5 544.4 420.1 572.5 459.5 566.9 482.0 550.0 482.0 538.7 448.2 516.2 425.7zM715.9 451.0 735.6 453.9 755.3 476.4 749.7 515.7 738.4 535.4 724.3 527.0 715.9 498.9zM592.2 380.7 611.9 355.4 625.9 363.9 625.9 400.4 595.0 397.6zM775.0 510.1 797.5 493.2 825.6 498.9 805.9 518.5 775.0 521.3z"/><g fill="#e8f2e0" opacity=".6"><ellipse cx="688" cy="71" rx="5" ry="2" transform="rotate(28 688 71)"/><ellipse cx="528" cy="91" rx="7" ry="2" transform="rotate(-29 528 91)"/><ellipse cx="765" cy="67" rx="2" ry="3" transform="rotate(32 765 67)"/><ellipse cx="548" cy="74" rx="5" ry="4" transform="rotate(33 548 74)"/><ellipse cx="871" cy="66" rx="3" ry="3" transform="rotate(-23 871 66)"/><ellipse cx="664" cy="71" rx="3" ry="2" transform="rotate(-17 664 71)"/><ellipse cx="534" cy="90" rx="3" ry="2" transform="rotate(-32 534 90)"/><ellipse cx="856" cy="92" rx="4" ry="3" transform="rotate(0 856 92)"/><ellipse cx="787" cy="106" rx="4" ry="2" transform="rotate(-17 787 106)"/><ellipse cx="950" cy="75" rx="5" ry="3" transform="rotate(3 950 75)"/><ellipse cx="971" cy="77" rx="7" ry="2" transform="rotate(13 971 77)"/><ellipse cx="577" cy="80" rx="7" ry="3" transform="rotate(-31 577 80)"/><ellipse cx="996" cy="90" rx="6" ry="2" transform="rotate(4 996 90)"/><ellipse cx="877" cy="91" rx="4" ry="4" transform="rotate(-6 877 91)"/><ellipse cx="793" cy="95" rx="2" ry="3" transform="rotate(33 793 95)"/><ellipse cx="1155" cy="102" rx="3" ry="2" transform="rotate(4 1155 102)"/><ellipse cx="478" cy="85" rx="3" ry="2" transform="rotate(-33 478 85)"/><ellipse cx="614" cy="77" rx="6" ry="2" transform="rotate(23 614 77)"/><ellipse cx="518" cy="85" rx="5" ry="4" transform="rotate(15 518 85)"/><ellipse cx="1065" cy="77" rx="4" ry="2" transform="rotate(8 1065 77)"/><ellipse cx="1130" cy="71" rx="3" ry="2" transform="rotate(-11 1130 71)"/><ellipse cx="470" cy="102" rx="3" ry="2" transform="rotate(-22 470 102)"/><ellipse cx="754" cy="81" rx="5" ry="4" transform="rotate(25 754 81)"/><ellipse cx="1125" cy="94" rx="6" ry="3" transform="rotate(31 1125 94)"/><ellipse cx="736" cy="82" rx="3" ry="3" transform="rotate(-33 736 82)"/><ellipse cx="595" cy="109" rx="4" ry="2" transform="rotate(36 595 109)"/><ellipse cx="499" cy="64" rx="3" ry="2" transform="rotate(6 499 64)"/><ellipse cx="890" cy="67" rx="3" ry="2" transform="rotate(-8 890 67)"/><ellipse cx="1129" cy="92" rx="4" ry="2" transform="rotate(22 1129 92)"/><ellipse cx="1155" cy="85" rx="4" ry="2" transform="rotate(-27 1155 85)"/><ellipse cx="985" cy="98" rx="4" ry="3" transform="rotate(26 985 98)"/><ellipse cx="478" cy="108" rx="5" ry="2" transform="rotate(29 478 108)"/><ellipse cx="1100" cy="99" rx="3" ry="3" transform="rotate(-29 1100 99)"/><ellipse cx="948" cy="76" rx="4" ry="2" transform="rotate(-12 948 76)"/><ellipse cx="834" cy="100" rx="4" ry="2" transform="rotate(-16 834 100)"/><ellipse cx="1025" cy="102" rx="6" ry="2" transform="rotate(26 1025 102)"/><ellipse cx="806" cy="98" rx="7" ry="3" transform="rotate(20 806 98)"/><ellipse cx="643" cy="96" rx="7" ry="3" transform="rotate(4 643 96)"/><ellipse cx="1129" cy="81" rx="3" ry="2" transform="rotate(-15 1129 81)"/><ellipse cx="698" cy="86" rx="7" ry="3" transform="rotate(-40 698 86)"/><ellipse cx="797" cy="94" rx="6" ry="2" transform="rotate(-25 797 94)"/><ellipse cx="1097" cy="100" rx="6" ry="3" transform="rotate(-18 1097 100)"/><ellipse cx="765" cy="93" rx="2" ry="4" transform="rotate(10 765 93)"/><ellipse cx="785" cy="98" rx="2" ry="2" transform="rotate(-24 785 98)"/><ellipse cx="481" cy="91" rx="4" ry="3" transform="rotate(38 481 91)"/><ellipse cx="1039" cy="109" rx="5" ry="2" transform="rotate(30 1039 109)"/><ellipse cx="845" cy="65" rx="6" ry="3" transform="rotate(-27 845 65)"/><ellipse cx="830" cy="107" rx="4" ry="4" transform="rotate(-13 830 107)"/><ellipse cx="482" cy="74" rx="5" ry="3" transform="rotate(1 482 74)"/><ellipse cx="643" cy="83" rx="3" ry="4" transform="rotate(5 643 83)"/><ellipse cx="1089" cy="94" rx="6" ry="3" transform="rotate(24 1089 94)"/><ellipse cx="553" cy="71" rx="5" ry="4" transform="rotate(-17 553 71)"/><ellipse cx="887" cy="100" rx="3" ry="2" transform="rotate(39 887 100)"/><ellipse cx="968" cy="90" rx="4" ry="3" transform="rotate(31 968 90)"/><ellipse cx="799" cy="100" rx="6" ry="2" transform="rotate(-16 799 100)"/><ellipse cx="655" cy="100" rx="5" ry="3" transform="rotate(-32 655 100)"/><ellipse cx="771" cy="92" rx="5" ry="3" transform="rotate(-5 771 92)"/><ellipse cx="778" cy="89" rx="4" ry="4" transform="rotate(26 778 89)"/><ellipse cx="1074" cy="107" rx="3" ry="3" transform="rotate(-15 1074 107)"/><ellipse cx="1048" cy="70" rx="3" ry="3" transform="rotate(-31 1048 70)"/><ellipse cx="930" cy="84" rx="3" ry="2" transform="rotate(-25 930 84)"/><ellipse cx="1088" cy="71" rx="6" ry="3" transform="rotate(-22 1088 71)"/><ellipse cx="639" cy="70" rx="4" ry="3" transform="rotate(-28 639 70)"/><ellipse cx="740" cy="86" rx="7" ry="4" transform="rotate(-20 740 86)"/><ellipse cx="955" cy="110" rx="4" ry="3" transform="rotate(5 955 110)"/><ellipse cx="684" cy="97" rx="2" ry="3" transform="rotate(16 684 97)"/><ellipse cx="953" cy="82" rx="5" ry="2" transform="rotate(-32 953 82)"/><ellipse cx="541" cy="106" rx="3" ry="4" transform="rotate(-30 541 106)"/><ellipse cx="647" cy="66" rx="6" ry="2" transform="rotate(-24 647 66)"/><ellipse cx="1034" cy="103" rx="5" ry="4" transform="rotate(11 1034 103)"/><ellipse cx="1300" cy="79" rx="6" ry="2" transform="rotate(-76 1300 79)"/><ellipse cx="1422" cy="68" rx="3" ry="2" transform="rotate(-42 1422 68)"/><ellipse cx="1818" cy="82" rx="7" ry="2" transform="rotate(-59 1818 82)"/><ellipse cx="1911" cy="175" rx="7" ry="2" transform="rotate(-78 1911 175)"/><ellipse cx="1314" cy="107" rx="2" ry="1" transform="rotate(-61 1314 107)"/><ellipse cx="1379" cy="183" rx="6" ry="2" transform="rotate(-29 1379 183)"/><ellipse cx="1252" cy="131" rx="2" ry="2" transform="rotate(-45 1252 131)"/><ellipse cx="1900" cy="201" rx="3" ry="2" transform="rotate(-38 1900 201)"/><ellipse cx="1793" cy="179" rx="5" ry="3" transform="rotate(-55 1793 179)"/><ellipse cx="1895" cy="146" rx="3" ry="1" transform="rotate(-68 1895 146)"/><ellipse cx="1802" cy="252" rx="6" ry="2" transform="rotate(-58 1802 252)"/><ellipse cx="1903" cy="287" rx="2" ry="2" transform="rotate(-24 1903 287)"/><ellipse cx="1413" cy="107" rx="3" ry="3" transform="rotate(-25 1413 107)"/><ellipse cx="1582" cy="322" rx="6" ry="2" transform="rotate(-78 1582 322)"/><ellipse cx="1550" cy="106" rx="5" ry="2" transform="rotate(-59 1550 106)"/><ellipse cx="1897" cy="210" rx="3" ry="3" transform="rotate(-61 1897 210)"/><ellipse cx="1387" cy="113" rx="4" ry="1" transform="rotate(-63 1387 113)"/><ellipse cx="1581" cy="65" rx="4" ry="1" transform="rotate(-55 1581 65)"/><ellipse cx="1816" cy="105" rx="7" ry="3" transform="rotate(-42 1816 105)"/><ellipse cx="1905" cy="104" rx="6" ry="2" transform="rotate(-78 1905 104)"/><ellipse cx="1797" cy="254" rx="5" ry="2" transform="rotate(-36 1797 254)"/><ellipse cx="1788" cy="101" rx="5" ry="2" transform="rotate(-27 1788 101)"/><ellipse cx="1789" cy="68" rx="6" ry="3" transform="rotate(-35 1789 68)"/><ellipse cx="1395" cy="72" rx="3" ry="2" transform="rotate(-74 1395 72)"/><ellipse cx="1274" cy="69" rx="5" ry="1" transform="rotate(-64 1274 69)"/><ellipse cx="1745" cy="198" rx="5" ry="2" transform="rotate(-76 1745 198)"/><ellipse cx="1743" cy="190" rx="7" ry="3" transform="rotate(-65 1743 190)"/><ellipse cx="1732" cy="119" rx="6" ry="3" transform="rotate(-49 1732 119)"/><ellipse cx="1811" cy="84" rx="7" ry="2" transform="rotate(-78 1811 84)"/><ellipse cx="1292" cy="103" rx="4" ry="2" transform="rotate(-61 1292 103)"/><ellipse cx="1659" cy="99" rx="5" ry="2" transform="rotate(-37 1659 99)"/><ellipse cx="1307" cy="122" rx="5" ry="2" transform="rotate(-62 1307 122)"/><ellipse cx="1872" cy="69" rx="5" ry="3" transform="rotate(-52 1872 69)"/><ellipse cx="1911" cy="167" rx="7" ry="3" transform="rotate(-76 1911 167)"/><ellipse cx="1632" cy="102" rx="5" ry="3" transform="rotate(-72 1632 102)"/><ellipse cx="1429" cy="94" rx="4" ry="2" transform="rotate(-24 1429 94)"/><ellipse cx="1568" cy="71" rx="2" ry="2" transform="rotate(-52 1568 71)"/><ellipse cx="1322" cy="152" rx="4" ry="2" transform="rotate(-55 1322 152)"/><ellipse cx="1273" cy="91" rx="7" ry="2" transform="rotate(-21 1273 91)"/><ellipse cx="1762" cy="273" rx="5" ry="1" transform="rotate(-32 1762 273)"/><ellipse cx="1666" cy="307" rx="8" ry="2" transform="rotate(-34 1666 307)"/><ellipse cx="1568" cy="307" rx="5" ry="1" transform="rotate(-54 1568 307)"/><ellipse cx="1739" cy="324" rx="4" ry="2" transform="rotate(-61 1739 324)"/><ellipse cx="1291" cy="197" rx="7" ry="2" transform="rotate(-52 1291 197)"/><ellipse cx="1852" cy="329" rx="5" ry="1" transform="rotate(-68 1852 329)"/><ellipse cx="1405" cy="110" rx="5" ry="2" transform="rotate(-57 1405 110)"/><ellipse cx="1414" cy="216" rx="7" ry="2" transform="rotate(-54 1414 216)"/><ellipse cx="1382" cy="136" rx="7" ry="2" transform="rotate(-44 1382 136)"/><ellipse cx="1893" cy="97" rx="5" ry="2" transform="rotate(-25 1893 97)"/><ellipse cx="1813" cy="89" rx="7" ry="2" transform="rotate(-39 1813 89)"/><ellipse cx="1541" cy="318" rx="7" ry="3" transform="rotate(-79 1541 318)"/><ellipse cx="1326" cy="177" rx="7" ry="3" transform="rotate(-43 1326 177)"/><ellipse cx="1571" cy="83" rx="8" ry="3" transform="rotate(-47 1571 83)"/><ellipse cx="1817" cy="323" rx="3" ry="1" transform="rotate(-71 1817 323)"/><ellipse cx="1844" cy="87" rx="7" ry="1" transform="rotate(-72 1844 87)"/><ellipse cx="1326" cy="131" rx="6" ry="2" transform="rotate(-73 1326 131)"/><ellipse cx="1307" cy="144" rx="8" ry="1" transform="rotate(-64 1307 144)"/><ellipse cx="1391" cy="224" rx="2" ry="2" transform="rotate(-51 1391 224)"/><ellipse cx="1428" cy="148" rx="7" ry="1" transform="rotate(-47 1428 148)"/><ellipse cx="1398" cy="130" rx="8" ry="2" transform="rotate(-61 1398 130)"/><ellipse cx="1277" cy="116" rx="7" ry="2" transform="rotate(-75 1277 116)"/><ellipse cx="1864" cy="124" rx="2" ry="2" transform="rotate(-54 1864 124)"/><ellipse cx="1245" cy="142" rx="7" ry="1" transform="rotate(-49 1245 142)"/><ellipse cx="1895" cy="147" rx="7" ry="1" transform="rotate(-66 1895 147)"/><ellipse cx="1567" cy="306" rx="2" ry="2" transform="rotate(-21 1567 306)"/><ellipse cx="1898" cy="102" rx="2" ry="1" transform="rotate(-55 1898 102)"/><ellipse cx="1452" cy="94" rx="2" ry="1" transform="rotate(-68 1452 94)"/><ellipse cx="1744" cy="72" rx="6" ry="2" transform="rotate(-57 1744 72)"/><ellipse cx="1905" cy="182" rx="3" ry="1" transform="rotate(-75 1905 182)"/><ellipse cx="1380" cy="159" rx="7" ry="3" transform="rotate(-53 1380 159)"/></g><path fill="none" stroke="#e2eeec" stroke-width="2" stroke-linejoin="round" d="M460.0 205.4 476.9 216.1 516.2 220.9 519.1 236.4M527.5 215.3 552.8 213.9 572.5 208.2 592.2 194.2 600.6 185.7 628.7 185.7 668.1 181.5 685.0 178.7 727.2 188.5 737.0 180.1 758.1 182.9 777.8 180.1 791.8 191.4 789.0 205.4 805.9 213.9 800.3 223.7 825.6 227.9 848.1 222.3 864.9 220.9 850.9 227.9 853.7 239.2 873.4 253.2 881.8 278.5 893.1 301.0 894.5 332.0M893.1 302.0 894.5 324.5 901.5 341.4 907.1 358.2 904.3 375.1 908.5 394.8 907.1 420.1 890.3 428.5 893.1 448.2 907.1 459.5 938.1 473.5 954.9 496.0 957.8 515.7 980.2 541.0 999.9 555.1 1022.4 572.0"/><path fill="none" stroke="#e2eeec" stroke-width="4" stroke-linejoin="round" d="M552.8 213.9 572.5 208.2 592.2 194.2 600.6 185.7M592.2 194.2 603.4 208.2 602.0 225.1M791.8 191.4 789.0 205.4 805.9 213.9 800.3 223.7 825.6 227.9 848.1 222.3 864.9 220.9M901.5 341.4 907.1 358.2 904.3 375.1 908.5 394.8 907.1 420.1 890.3 428.5"/><g fill="#dfeceb" stroke="#d3d9f3" stroke-width=".8"><path d="M1410 262L1430 228 1446 202 1460 190.500 1470 176.600 1477 167 1502 155.700 1511 146.400 1521 130 1525 114 1535 111.600 1544 121 1558 125.500 1590 125.500 1609 130 1623 137 1632 153.400 1646 176.600 1653 193 1699 193 1699.400 209 1702 225 1711 244 1702 267 1711 276.400 1722.700 274 1725 299.600 1715.700 306.600 1690 304.300 1690 283.400 1674 285.700 1655 290.300 1637 292.700 1620.500 299.600 1604 306.600 1585.700 302 1576.400 302 1567 292.700 1558 281 1548.600 274 1539 271.800 1528 271.800 1500 292 1440 300z"/><path d="M1704.700 350.500L1688.800 341.400 1672.900 333.400 1659.200 336.800 1645.600 342.500 1627.400 345.900 1620.600 352.700 1609.200 361.800 1591 359.600 1584.200 366.400 1575.100 375.500 1566 393.700 1556.900 407.300 1545.500 418.700 1538.700 439.200 1536.400 446 1545.500 443.700 1556.900 432.400 1570.500 423.300 1587.600 392.600 1579.600 409.600 1572.800 425.500 1566 443.700 1561.400 457.400 1556.900 471 1552.300 484.700 1551.200 502.900 1545.500 523.400 1543.200 546.100 1547.800 573 1629.700 573 1624 546.100 1613.700 512 1618.300 498.300 1614.900 477.900 1624 457.400 1626.300 439.200 1630.800 432.400 1645.600 418.700 1657 407.300 1659.200 430.100 1663.800 430.100 1670.600 402.800 1675.200 391.400 1688.800 384.600 1695.600 382.300 1686.500 373.200 1688.800 366.400 1700.200 364.100z"/><path d="M1700 352L1719 355 1737 369 1755 382 1771 394 1778 407 1772 411 1778 428 1778 457 1764 476 1746 494 1746 505 1758 512 1771 503 1782 487 1796 481 1807 489 1814 510 1819 535 1826 548 1826 573 1848 573 1860 523 1860 478 1866 460 1880 437 1882 425 1876 405 1862 398 1880 400 1898 425 1905 439 1920 430 1920 300 1880 310 1840 318 1790 322 1750 330 1722 340z"/><path d="M1511 471l8-2 4 10-3 18-8 2z"/><path d="M1172 84l18-6 22 4 16 14-6 20-18 6-8 18-16-6z"/><ellipse cx="1196" cy="303" rx="16" ry="7"/><ellipse cx="1180" cy="235" rx="20" ry="8"/><ellipse cx="1388" cy="236" rx="10" ry="6"/><path d="M1263 118l12-6 10 4-2 10-12 6z M1300 117l10-5 12 2 4 12-14 8-12-6z"/></g><path fill="#fefefd" d="M1765 348l35-3 40 7 22 10-22 4-40-8-30-2z"/><path fill="#eff5ea" d="M1629.0 149.0 1631.1 153.5 1658.7 154.1 1658.7 169.5 1665.8 170.5 1655.6 181.7 1647.4 189.9 1639.3 179.7 1633.1 165.4zM1700.6 197.1 1704.6 198.1 1704.6 209.3 1717.3 209.3 1717.3 222.6 1712.8 222.6 1712.8 234.9 1717.9 236.9 1714.9 244.1 1700.6 230.8 1691.4 218.5 1696.5 206.3z"/><path fill="none" stroke="#cfd5f7" stroke-width="1.100" d="M1518.7 108.2 1539.1 104.1 1559.6 112.3 1580.0 130.6 1586.1 124.5 1592.3 126.6 1603.5 126.6 1616.8 129.6 1629.0 137.8 1657.6 134.7 1669.9 139.8 1682.2 149.0 1688.3 161.3 1698.5 169.5 1702.6 191.9 1696.5 206.3 1702.6 230.8 1713.8 245.1 1703.6 265.5 1721.0 273.7 1724.1 283.9 1727.1 299.2 1735.3 302.3 1739.4 314.5 1760.0 316.6"/><g stroke="#efefef" stroke-width="1"><path d="M460 118.500H1920M460 407.500H1920M571.500 62V572M859.500 62V572M1147.500 62V572M1434.500 62V572M1722.500 62V572"/></g><path fill="none" stroke="#cfd5f7" stroke-width="1.100" d="M526.1 62.0 527.5 90.1 521.9 118.2 527.5 143.6 520.5 161.8 493.7 157.6 460.0 145.0M520.5 161.8 476.9 215.3 472.7 239.2M873.4 62.0 872.0 90.1 870.6 126.7 856.5 130.9 856.5 216.7 883.2 253.2 883.2 278.5M759.5 278.5 759.5 303.8 751.1 305.3 748.2 332.0M460.0 256.0 471.2 258.9 485.3 306.7 490.9 332.0M485.3 306.7 527.5 292.6 550.0 301.0 578.1 320.7M482.5 302.0 489.5 318.9 488.1 355.4M752.5 302.0 749.7 327.3 749.7 352.6 741.2 372.3 741.2 414.5 725.7 427.1 725.7 448.2 732.8 455.3 713.1 473.5 707.5 498.9 704.7 532.6 696.2 572.0"/><path fill="none" stroke="#cfd5f7" stroke-width="1.100" d="M1309.5 62.0 1324.9 69.7 1353.8 81.3 1382.7 92.8 1401.9 108.2 1430.8 117.9 1440.5 127.5 1442.4 142.9M1190.0 223.8 1209.3 204.6 1228.5 185.3 1245.9 162.2 1251.7 150.6 1261.3 142.9 1274.8 135.2 1305.6 132.3 1344.1 133.3 1363.4 133.3 1382.7 137.1 1417.4 139.1 1444.3 144.9 1475.2 156.4M1261.3 142.9 1265.1 154.5 1280.6 158.3 1286.3 177.6 1297.9 200.7 1299.8 216.1 1305.6 227.7M1454.0 150.6 1455.9 160.3 1473.2 159.3M1475.2 156.4 1498.3 144.9 1513.7 119.8 1521.4 111.1 1536.8 112.1 1559.9 119.8 1583.1 117.9M1401.9 108.2 1407.7 90.9 1409.7 87.0M1307.5 488.6 1309.5 507.9 1317.2 523.3 1315.2 572.1M1317.2 490.6 1328.7 507.9 1344.1 534.9 1349.9 546.4 1375.0 559.9 1382.7 572.1M1375.0 442.4 1401.9 444.3 1430.8 440.5 1459.7 444.3 1471.3 450.1M1455.9 423.1 1475.2 425.0 1498.3 430.8 1517.6 438.5 1534.9 448.2 1540.7 453.9M1282.5 546.4 1297.9 550.3 1305.6 572.1M1498.3 515.6 1513.7 504.0 1517.6 500.2"/><g fill="none" stroke="#cfd5f7" stroke-width="1.100"><path d="M1070 62l-4 30 6 40-4 40 10 40 8 40 6 40"/><path d="M1090 62l6 40 10 40 12 40 10 30"/><path d="M1725 300l60 -10 60 -14 75 -20"/></g><path fill="none" stroke="#dbe9e4" stroke-width="1.800" d="M1332.6 457.8 1344.1 477.1 1363.4 486.7 1371.1 507.9 1373.0 525.2 1378.8 544.5 1376.9 572.1"/><path fill="#eff5ea" d="M1319.1 152.6 1328.7 142.9 1359.6 138.1 1386.5 139.1 1386.5 166.0 1394.2 169.9 1386.5 175.7 1363.4 185.3 1344.1 175.7 1332.6 164.1 1322.9 162.2z"/><path fill="#f6f9f3" d="M1297.9 152.6 1313.3 171.8 1349.9 185.3 1390.4 171.8 1436.6 189.2 1459.7 190.1 1446.3 200.7 1428.9 208.4 1401.9 234.1 1282.5 234.1 1280.6 212.3 1297.9 208.4z"/><path fill="#dfeceb" d="M1247.8 125.6 1263.2 117.9 1276.7 125.6 1274.8 139.1 1259.4 137.1zM1351.8 119.8 1363.4 115.9 1369.2 123.7 1359.6 127.5zM1400.0 117.9 1413.5 114.0 1421.2 123.7 1409.7 129.4zM1276.7 146.8 1297.9 144.9 1305.6 154.5 1286.3 158.3z"/><path fill="none" stroke="#ecd6c3" stroke-width="1.300" d="M533.1 332.0 552.8 320.7 603.4 320.7 628.7 306.7 642.8 289.8 673.7 267.3 682.2 256.0 715.9 270.7 758.1 272.9 808.7 277.1 881.8 277.1 999.9 274.3 1087.1 275.7M460.0 368.1 488.1 355.4 552.8 321.7 603.4 320.3 634.4 302.0M488.1 355.4 533.1 358.2 547.2 386.4 550.0 413.1 566.9 428.5 580.9 462.3 603.4 470.7 621.7 472.1 640.0 463.7 668.1 465.1 693.4 460.9 708.9 448.2 725.7 448.2 741.2 453.9 755.3 476.4 786.2 477.8 825.6 496.0 859.3 496.0 881.8 491.8 938.1 494.6 960.6 501.7 999.9 504.5 1050.6 508.7 1106.8 511.5M580.9 462.3 583.7 507.3 596.4 524.2 599.2 564.9 640.0 572.0"/><path fill="none" stroke="#ecd6c3" stroke-width="1.300" d="M1267.1 400.0 1267.1 419.3 1268.0 477.1 1263.2 507.9 1263.2 572.1M1103.3 507.9 1190.0 509.8 1263.2 508.9 1296.0 506.9 1309.5 490.6 1344.1 488.6 1371.1 494.4 1409.7 486.7 1421.2 492.5 1444.3 511.8 1459.7 523.3 1467.5 550.3M1359.6 405.8 1375.0 444.3 1407.7 477.1 1409.7 486.7M1309.5 419.3 1324.9 419.3 1359.6 419.3 1394.2 418.3M1467.5 550.3 1498.3 548.4 1540.7 552.2 1559.9 553.2M1455.9 425.0 1467.5 446.2 1490.6 465.5 1506.0 473.2 1511.8 500.2 1517.6 523.3 1540.7 552.2M1459.7 523.3 1479.0 534.9 1490.6 572.1M1467.5 550.3 1440.5 565.7 1428.9 572.1M1506.0 473.2 1533.0 450.1 1536.8 444.3 1529.1 428.9 1506.0 423.1"/><g fill="none" stroke="#efdccb" stroke-width="1.200"><path d="M1086 276L1140 310 1200 380 1267 419"/><path d="M1068 100L1070 158 1086 276 1087 437 1100 520 1110 572"/><path d="M1267 419L1300 330 1330 300 1350 240"/><path d="M1585 548L1620 560 1705 553 1774 551 1840 560 1920 565M1705 553L1702 454 1712 330 1714 306"/><path d="M1661 558L1680 500 1702 454 1740 480 1774 551M1774 551L1800 520 1812 495"/></g><g fill="none" stroke="#d4d4d4" stroke-width="1" stroke-dasharray="4 3"><path d="M716 114V572M716 344.500H1105M460 413.500H716M716 556.500H1105M1105 345V572M1105 520.500H1375M853.500 62V113"/><path d="M1490 190L1470 240"/><path d="M1538 420l8-40 20-30 20-20 40 0 40 18-30 30-30 60-10 60 0 34"/></g><path fill="none" stroke="#969696" stroke-width="2.200" stroke-dasharray="12 6" d="M460 113H1165"/><path fill="none" stroke="#8c8c8c" stroke-width="1.300" stroke-dasharray="7 4" d="M1172 62V84"/><path fill="none" stroke="#8f8f8f" stroke-width="2.200" stroke-dasharray="9 5.500" d="M1172 84L1187 85.400 1193 117 1196 131 1215 137.500 1236 140 1244 150 1259 144 1280 141.400 1300 149 1306 162 1317 170 1319 163.600 1332 165 1337.500 172.700 1358 185.700 1371 181.800 1390 172.700 1397 181.800 1426 181.800 1436.500 189.600 1468 191 1488.500 179.200 1517 167 1650 244.300 1698 274.500 1702 294 1715 305 1734 301 1738.400 324.600 1747 334.400 1762 331.600 1770.500 341.300 1764 352 1818 387.700 1838.700 514.500 1826 548 1818 572"/><text x="888.0" y="223.0" font-size="11.5" fill="#d9a3ab" text-anchor="middle">NORTH</text><text x="888.0" y="238.0" font-size="11.5" fill="#d9a3ab" text-anchor="middle">DAKOTA</text><text x="897.0" y="422.0" font-size="11.5" fill="#d9a3ab" text-anchor="middle">SOUTH</text><text x="897.0" y="437.0" font-size="11.5" fill="#d9a3ab" text-anchor="middle">DAKOTA</text><text x="507.0" y="538.0" font-size="11.5" fill="#d9a3ab" text-anchor="start">WYOMING</text><text x="1558.0" y="328.0" font-size="11.5" fill="#d9a3ab" text-anchor="start">MICHIGAN</text><text x="1663.0" y="502.0" font-size="11.5" fill="#d9a3ab" text-anchor="start">MICHIGAN</text><text x="1420.0" y="473.0" font-size="11.5" fill="#d9a3ab" text-anchor="start">WISCONSIN</text><text x="458.0" y="261.0" font-size="11.5" fill="#d9a3ab" text-anchor="start">NA</text><circle cx="769.5" cy="101.5" r="2.200" fill="#fff" stroke="#a9a9a9" stroke-width="1"/><text x="773.0" y="103.0" font-size="10.5" fill="#a9a9a9" text-anchor="start">Estevan</text><circle cx="519.5" cy="161.5" r="2.200" fill="#fff" stroke="#a9a9a9" stroke-width="1"/><text x="523.0" y="163.0" font-size="10.5" fill="#a9a9a9" text-anchor="start">Malta</text><circle cx="582.5" cy="174.5" r="2.200" fill="#fff" stroke="#a9a9a9" stroke-width="1"/><text x="586.0" y="176.0" font-size="10.5" fill="#a9a9a9" text-anchor="start">Glasgow</text><circle cx="737.5" cy="178.5" r="2.200" fill="#fff" stroke="#a9a9a9" stroke-width="1"/><text x="741.0" y="180.0" font-size="10.5" fill="#a9a9a9" text-anchor="start">Williston</text><circle cx="882.5" cy="279.5" r="2.200" fill="#fff" stroke="#a9a9a9" stroke-width="1"/><text x="886.0" y="281.0" font-size="13.5" fill="#a9a9a9" text-anchor="start">Bismarck</text><circle cx="1082.0" cy="274.5" r="2.200" fill="#fff" stroke="#a9a9a9" stroke-width="1"/><text x="1085.5" y="276.0" font-size="13.5" fill="#a9a9a9" text-anchor="start">Fargo</text><circle cx="487.5" cy="355.5" r="2.200" fill="#fff" stroke="#a9a9a9" stroke-width="1"/><text x="491.0" y="357.0" font-size="13.5" fill="#a9a9a9" text-anchor="start">Billings</text><circle cx="900.5" cy="373.5" r="2.200" fill="#fff" stroke="#a9a9a9" stroke-width="1"/><text x="904.0" y="375.0" font-size="10.5" fill="#a9a9a9" text-anchor="start">Mobridge</text><circle cx="566.5" cy="427.5" r="2.200" fill="#fff" stroke="#a9a9a9" stroke-width="1"/><text x="570.0" y="429.0" font-size="10.5" fill="#a9a9a9" text-anchor="start">Sheridan</text><text stroke="#9c9c9c" stroke-width=".4" x="1176.0" y="413.0" font-size="16.3" fill="#9c9c9c" text-anchor="start">Minneapolis</text><circle cx="1309.5" cy="482.5" r="2.200" fill="#fff" stroke="#a9a9a9" stroke-width="1"/><text x="1313.0" y="484.0" font-size="13.5" fill="#a9a9a9" text-anchor="start">Rochester</text><circle cx="1093.5" cy="515.5" r="2.200" fill="#fff" stroke="#a9a9a9" stroke-width="1"/><text x="1097.0" y="517.0" font-size="13.5" fill="#a9a9a9" text-anchor="start">Sioux Falls</text><circle cx="1518.5" cy="465.5" r="2.200" fill="#fff" stroke="#a9a9a9" stroke-width="1"/><text x="1522.0" y="467.0" font-size="13.5" fill="#a9a9a9" text-anchor="start">Appleton</text><text stroke="#9c9c9c" stroke-width=".4" x="1403.0" y="549.0" font-size="16.3" fill="#9c9c9c" text-anchor="start">Madison</text><circle cx="1543.5" cy="552.5" r="2.200" fill="#fff" stroke="#a9a9a9" stroke-width="1"/><text x="1547.0" y="554.0" font-size="16.0" fill="#a9a9a9" text-anchor="start">Milwaukee</text><circle cx="1657.5" cy="556.5" r="2.200" fill="#fff" stroke="#a9a9a9" stroke-width="1"/><text x="1661.0" y="558.0" font-size="14.5" fill="#a9a9a9" text-anchor="start">Grand Rapids</text><circle cx="1757.5" cy="553.5" r="2.200" fill="#fff" stroke="#a9a9a9" stroke-width="1"/><text x="1761.0" y="555.0" font-size="13.5" fill="#a9a9a9" text-anchor="start">Flint</text><text x="1854.0" y="522.0" font-size="15.0" fill="#9a9a9a" text-anchor="start">Kitchener</text><text x="1478.0" y="141.0" font-size="13.5" fill="#a9a9a9" text-anchor="start">Thunder</text><circle cx="1474.5" cy="156.5" r="2.200" fill="#fff" stroke="#a9a9a9" stroke-width="1"/><text x="1478.0" y="158.0" font-size="13.5" fill="#a9a9a9" text-anchor="start">Bay</text><circle cx="1811.5" cy="310.5" r="2.200" fill="#fff" stroke="#a9a9a9" stroke-width="1"/><text x="1815.0" y="312.0" font-size="10.5" fill="#a9a9a9" text-anchor="start">Elliot Lake</text><text x="1905.0" y="155.0" font-size="13.0" fill="#a9a9a9" text-anchor="start">ni</text><path d="M634.0 282.0h14v2.300h-14z" fill="#d9a0a0"/><path d="M634.0 284.3h14c0 6-3 9-7 11-4-2-7-5-7-11z" fill="#a9c4e6"/><text x="641.0" y="292.3" font-size="8" fill="#fff" text-anchor="middle" font-weight="bold">94</text><path d="M762.0 265.0h14v2.300h-14z" fill="#d9a0a0"/><path d="M762.0 267.3h14c0 6-3 9-7 11-4-2-7-5-7-11z" fill="#a9c4e6"/><text x="769.0" y="275.3" font-size="8" fill="#fff" text-anchor="middle" font-weight="bold">94</text><path d="M988.0 265.0h14v2.300h-14z" fill="#d9a0a0"/><path d="M988.0 267.3h14c0 6-3 9-7 11-4-2-7-5-7-11z" fill="#a9c4e6"/><text x="995.0" y="275.3" font-size="8" fill="#fff" text-anchor="middle" font-weight="bold">94</text><path d="M1361.0 428.0h14v2.300h-14z" fill="#d9a0a0"/><path d="M1361.0 430.3h14c0 6-3 9-7 11-4-2-7-5-7-11z" fill="#a9c4e6"/><text x="1368.0" y="438.3" font-size="8" fill="#fff" text-anchor="middle" font-weight="bold">94</text><path d="M1061.0 150.0h14v2.300h-14z" fill="#d9a0a0"/><path d="M1061.0 152.3h14c0 6-3 9-7 11-4-2-7-5-7-11z" fill="#a9c4e6"/><text x="1068.0" y="160.3" font-size="8" fill="#fff" text-anchor="middle" font-weight="bold">29</text><path d="M1080.0 429.0h14v2.300h-14z" fill="#d9a0a0"/><path d="M1080.0 431.3h14c0 6-3 9-7 11-4-2-7-5-7-11z" fill="#a9c4e6"/><text x="1087.0" y="439.3" font-size="8" fill="#fff" text-anchor="middle" font-weight="bold">29</text><path d="M1074.0 309.0h14v2.300h-14z" fill="#d9a0a0"/><path d="M1074.0 311.3h14c0 6-3 9-7 11-4-2-7-5-7-11z" fill="#a9c4e6"/><text x="1081.0" y="319.3" font-size="8" fill="#fff" text-anchor="middle" font-weight="bold">29</text><path d="M875.0 484.0h14v2.300h-14z" fill="#d9a0a0"/><path d="M875.0 486.3h14c0 6-3 9-7 11-4-2-7-5-7-11z" fill="#a9c4e6"/><text x="882.0" y="494.3" font-size="8" fill="#fff" text-anchor="middle" font-weight="bold">90</text><path d="M993.0 499.0h14v2.300h-14z" fill="#d9a0a0"/><path d="M993.0 501.3h14c0 6-3 9-7 11-4-2-7-5-7-11z" fill="#a9c4e6"/><text x="1000.0" y="509.3" font-size="8" fill="#fff" text-anchor="middle" font-weight="bold">90</text><path d="M778.0 469.0h14v2.300h-14z" fill="#d9a0a0"/><path d="M778.0 471.3h14c0 6-3 9-7 11-4-2-7-5-7-11z" fill="#a9c4e6"/><text x="785.0" y="479.3" font-size="8" fill="#fff" text-anchor="middle" font-weight="bold">90</text><path d="M660.0 458.0h14v2.300h-14z" fill="#d9a0a0"/><path d="M660.0 460.3h14c0 6-3 9-7 11-4-2-7-5-7-11z" fill="#a9c4e6"/><text x="667.0" y="468.3" font-size="8" fill="#fff" text-anchor="middle" font-weight="bold">90</text><path d="M576.0 476.0h14v2.300h-14z" fill="#d9a0a0"/><path d="M576.0 478.3h14c0 6-3 9-7 11-4-2-7-5-7-11z" fill="#a9c4e6"/><text x="583.0" y="486.3" font-size="8" fill="#fff" text-anchor="middle" font-weight="bold">25</text><path d="M1705.0 322.0h14v2.300h-14z" fill="#d9a0a0"/><path d="M1705.0 324.3h14c0 6-3 9-7 11-4-2-7-5-7-11z" fill="#a9c4e6"/><text x="1712.0" y="332.3" font-size="8" fill="#fff" text-anchor="middle" font-weight="bold">75</text><rect x="1693" y="446" width="18" height="15" rx="4" fill="#fff" stroke="#9a9a9a"/><text x="1702" y="457" font-size="8" fill="#8a8a8a" text-anchor="middle" font-weight="bold">127</text><rect x="1264" y="541" width="16" height="14" rx="4" fill="#fff" stroke="#9a9a9a"/><text x="1272" y="551.500" font-size="8" fill="#8a8a8a" text-anchor="middle" font-weight="bold">18</text><path d="M901.5 127.0 L935.8 125.9" fill="none" stroke="#74c680" stroke-width="5.0" stroke-dasharray="0 12 10 20"/><path d="M1094.4 133.7 L1119.1 157.5" fill="none" stroke="#41bfce" stroke-width="5.0"/><path d="M1127.3 130.7 L1147.3 167.3" fill="none" stroke="#41bfce" stroke-width="5.0"/><path d="M1162.8 120.3 L1200.3 135.0" fill="none" stroke="#b3a43e" stroke-width="5.0"/><path d="M1007.8 223.8 L1002.3 252.8" fill="none" stroke="#b3a43e" stroke-width="4.0"/><path d="M1003.4 203.6 L1007.8 223.8" fill="none" stroke="#b3a43e" stroke-width="4.0"/><path d="M990.0 313.6 L1021.2 330.2" fill="none" stroke="#74bbf0" stroke-width="6.0" stroke-dasharray="0 12 9 8"/><path d="M1021.2 330.2 L1041.3 309.7" fill="none" stroke="#74bbf0" stroke-width="6.0" stroke-dasharray="0 12 9 8"/><path d="M1043.6 324.4 L1061.8 351.5" fill="none" stroke="#74bbf0" stroke-width="6.0" stroke-dasharray="0 12 9 8"/><path d="M990.0 313.6 L1086.6 275.4" fill="none" stroke="#74bbf0" stroke-width="6.0"/><path d="M1086.6 275.4 L1138.0 292.0" fill="none" stroke="#d2896d" stroke-width="6.0"/><path d="M1086.6 275.4 L1124.0 299.0" fill="none" stroke="#b3a43e" stroke-width="5.0"/><path d="M1124.0 299.0 L1142.7 319.2" fill="none" stroke="#ebab63" stroke-width="3.0"/><path d="M1097.3 337.3 L1129.3 340.5" fill="none" stroke="#41bfce" stroke-width="5.0" stroke-dasharray="0 12 9 8"/><path d="M1086.6 275.4 L1096.7 319.2" fill="none" stroke="#41bfce" stroke-width="5.0"/><path d="M1138.3 376.8 L1106.0 372.0" fill="none" stroke="#539ed8" stroke-width="5.0" stroke-dasharray="0 13 8 20"/><path d="M1158.6 227.2 L1180.0 250.0" fill="none" stroke="#539ed8" stroke-width="5.0" stroke-dasharray="0 13 7 20"/><path d="M1224.0 353.5 L1262.4 390.3" fill="none" stroke="#8f98d8" stroke-width="5.0"/><path d="M1249.7 398.2 L1274.7 412.0" fill="none" stroke="#8f98d8" stroke-width="5.0"/><path d="M1309.4 431.8 L1402.0 419.5" fill="none" stroke="#8f98d8" stroke-width="5.0"/><path d="M1355.1 365.5 L1385.9 391.2" fill="none" stroke="#539ed8" stroke-width="6.0" stroke-dasharray="0 12 9 7"/><path d="M1385.9 391.2 L1402.0 416.0" fill="none" stroke="#539ed8" stroke-width="6.0" stroke-dasharray="0 12 9 7"/><path d="M1319.6 205.2 L1300.0 236.0" fill="none" stroke="#d2896d" stroke-width="6.0"/><path d="M1335.4 212.3 L1306.0 236.0" fill="none" stroke="#d2896d" stroke-width="6.0"/><path d="M1116.3 536.9 L1153.8 557.5" fill="none" stroke="#ae8f8f" stroke-width="6.0"/><path d="M1456.0 423.1 L1479.4 462.2" fill="none" stroke="#ae8f8f" stroke-width="6.0"/><path d="M1479.4 462.2 L1445.3 544.0" fill="none" stroke="#ae8f8f" stroke-width="6.0"/><circle cx="901.5" cy="127.0" r="10.8" fill="#74c680" stroke="#fff" stroke-width="3"/><circle cx="935.8" cy="125.9" r="10.8" fill="#74c680" stroke="#fff" stroke-width="3"/><circle cx="1086.2" cy="123.5" r="10.8" fill="#41bfce" stroke="#fff" stroke-width="3"/><circle cx="1111.5" cy="163.4" r="10.8" fill="#41bfce" stroke="#fff" stroke-width="3"/><circle cx="1118.6" cy="136.1" r="10.8" fill="#41bfce" stroke="#fff" stroke-width="3"/><circle cx="1094.4" cy="133.7" r="10.8" fill="#41bfce" stroke="#fff" stroke-width="3"/><circle cx="1127.3" cy="130.7" r="10.8" fill="#41bfce" stroke="#fff" stroke-width="3"/><circle cx="1119.1" cy="157.5" r="10.8" fill="#41bfce" stroke="#fff" stroke-width="3"/><circle cx="1147.3" cy="167.3" r="10.8" fill="#41bfce" stroke="#fff" stroke-width="3"/><circle cx="1158.0" cy="121.6" r="10.8" fill="#b3a43e" stroke="#fff" stroke-width="3"/><circle cx="1162.8" cy="120.3" r="10.8" fill="#b3a43e" stroke="#fff" stroke-width="3"/><circle cx="1200.3" cy="135.0" r="10.8" fill="#b3a43e" stroke="#fff" stroke-width="3"/><circle cx="1003.4" cy="203.6" r="10.8" fill="#b3a43e" stroke="#fff" stroke-width="3"/><circle cx="1007.8" cy="223.8" r="10.8" fill="#b3a43e" stroke="#fff" stroke-width="3"/><circle cx="1002.3" cy="252.8" r="10.8" fill="#b3a43e" stroke="#fff" stroke-width="3"/><circle cx="1033.7" cy="227.0" r="10.8" fill="#b3a43e" stroke="#fff" stroke-width="3"/><circle cx="1040.5" cy="242.4" r="10.8" fill="#b3a43e" stroke="#fff" stroke-width="3"/><circle cx="1047.6" cy="254.0" r="10.8" fill="#b3a43e" stroke="#fff" stroke-width="3"/><circle cx="1067.2" cy="258.3" r="10.8" fill="#b3a43e" stroke="#fff" stroke-width="3"/><circle cx="990.0" cy="313.6" r="10.8" fill="#74bbf0" stroke="#fff" stroke-width="3"/><circle cx="1021.2" cy="330.2" r="10.8" fill="#74bbf0" stroke="#fff" stroke-width="3"/><circle cx="1043.6" cy="324.4" r="10.8" fill="#74bbf0" stroke="#fff" stroke-width="3"/><circle cx="1041.3" cy="309.7" r="10.8" fill="#74bbf0" stroke="#fff" stroke-width="3"/><circle cx="1061.8" cy="351.5" r="10.8" fill="#74bbf0" stroke="#fff" stroke-width="3"/><circle cx="1074.1" cy="366.0" r="10.8" fill="#74bbf0" stroke="#fff" stroke-width="3"/><circle cx="1131.2" cy="323.1" r="10.8" fill="#41bfce" stroke="#fff" stroke-width="3"/><circle cx="1150.9" cy="306.5" r="10.8" fill="#41bfce" stroke="#fff" stroke-width="3"/><circle cx="1096.7" cy="319.2" r="10.8" fill="#41bfce" stroke="#fff" stroke-width="3"/><circle cx="1097.3" cy="337.3" r="10.8" fill="#41bfce" stroke="#fff" stroke-width="3"/><circle cx="1082.3" cy="335.4" r="10.8" fill="#41bfce" stroke="#fff" stroke-width="3"/><circle cx="1129.3" cy="340.5" r="10.8" fill="#41bfce" stroke="#fff" stroke-width="3"/><circle cx="1149.4" cy="295.5" r="10.8" fill="#d2896d" stroke="#fff" stroke-width="3"/><circle cx="1162.0" cy="327.8" r="10.8" fill="#d2896d" stroke="#fff" stroke-width="3"/><circle cx="1160.7" cy="348.4" r="10.8" fill="#539ed8" stroke="#fff" stroke-width="3"/><circle cx="1159.6" cy="366.5" r="10.8" fill="#539ed8" stroke="#fff" stroke-width="3"/><circle cx="1138.3" cy="376.8" r="10.8" fill="#539ed8" stroke="#fff" stroke-width="3"/><circle cx="1105.2" cy="381.5" r="10.8" fill="#539ed8" stroke="#fff" stroke-width="3"/><circle cx="1106.0" cy="372.0" r="10.8" fill="#539ed8" stroke="#fff" stroke-width="3"/><circle cx="1084.7" cy="383.1" r="10.8" fill="#539ed8" stroke="#fff" stroke-width="3"/><circle cx="1061.8" cy="388.6" r="10.8" fill="#539ed8" stroke="#fff" stroke-width="3"/><circle cx="1097.3" cy="395.7" r="10.8" fill="#539ed8" stroke="#fff" stroke-width="3"/><circle cx="1202.1" cy="367.9" r="10.8" fill="#d2896d" stroke="#fff" stroke-width="3"/><circle cx="1187.9" cy="373.4" r="10.8" fill="#d2896d" stroke="#fff" stroke-width="3"/><circle cx="1209.2" cy="380.5" r="10.8" fill="#d2896d" stroke="#fff" stroke-width="3"/><circle cx="1192.6" cy="390.8" r="10.8" fill="#d2896d" stroke="#fff" stroke-width="3"/><circle cx="1182.3" cy="397.9" r="10.8" fill="#d2896d" stroke="#fff" stroke-width="3"/><circle cx="1174.8" cy="285.5" r="10.8" fill="#8f98d8" stroke="#fff" stroke-width="3"/><circle cx="1187.0" cy="270.3" r="10.8" fill="#8f98d8" stroke="#fff" stroke-width="3"/><circle cx="1158.6" cy="227.2" r="10.8" fill="#539ed8" stroke="#fff" stroke-width="3"/><circle cx="1180.0" cy="250.0" r="10.8" fill="#539ed8" stroke="#fff" stroke-width="3"/><circle cx="1169.8" cy="259.0" r="10.8" fill="#539ed8" stroke="#fff" stroke-width="3"/><circle cx="1159.4" cy="266.4" r="10.8" fill="#539ed8" stroke="#fff" stroke-width="3"/><circle cx="1166.5" cy="272.3" r="10.8" fill="#539ed8" stroke="#fff" stroke-width="3"/><circle cx="1248.6" cy="359.2" r="10.8" fill="#74bbf0" stroke="#fff" stroke-width="3"/><circle cx="1262.4" cy="390.3" r="10.8" fill="#8f98d8" stroke="#fff" stroke-width="3"/><circle cx="1249.7" cy="398.2" r="10.8" fill="#8f98d8" stroke="#fff" stroke-width="3"/><circle cx="1274.7" cy="412.0" r="10.8" fill="#8f98d8" stroke="#fff" stroke-width="3"/><circle cx="1281.0" cy="412.0" r="10.8" fill="#8f98d8" stroke="#fff" stroke-width="3"/><circle cx="1287.0" cy="412.0" r="10.8" fill="#8f98d8" stroke="#fff" stroke-width="3"/><circle cx="1293.6" cy="417.6" r="10.8" fill="#8f98d8" stroke="#fff" stroke-width="3"/><circle cx="1309.4" cy="431.8" r="10.8" fill="#8f98d8" stroke="#fff" stroke-width="3"/><circle cx="1314.0" cy="353.7" r="10.8" fill="#ebab63" stroke="#fff" stroke-width="3"/><circle cx="1308.3" cy="372.6" r="10.8" fill="#ebab63" stroke="#fff" stroke-width="3"/><circle cx="1331.5" cy="374.2" r="10.8" fill="#ebab63" stroke="#fff" stroke-width="3"/><circle cx="1319.6" cy="394.7" r="10.8" fill="#ebab63" stroke="#fff" stroke-width="3"/><circle cx="1324.4" cy="408.9" r="10.8" fill="#ebab63" stroke="#fff" stroke-width="3"/><circle cx="1314.1" cy="417.6" r="10.8" fill="#ebab63" stroke="#fff" stroke-width="3"/><circle cx="1355.1" cy="365.5" r="10.8" fill="#539ed8" stroke="#fff" stroke-width="3"/><circle cx="1340.9" cy="384.4" r="10.8" fill="#539ed8" stroke="#fff" stroke-width="3"/><circle cx="1351.2" cy="390.0" r="10.8" fill="#539ed8" stroke="#fff" stroke-width="3"/><circle cx="1376.4" cy="401.8" r="10.8" fill="#539ed8" stroke="#fff" stroke-width="3"/><circle cx="1385.9" cy="391.2" r="10.8" fill="#539ed8" stroke="#fff" stroke-width="3"/><circle cx="1283.3" cy="437.3" r="10.8" fill="#df84d1" stroke="#fff" stroke-width="3"/><circle cx="1298.3" cy="440.5" r="10.8" fill="#df84d1" stroke="#fff" stroke-width="3"/><circle cx="1334.3" cy="440.9" r="10.8" fill="#df84d1" stroke="#fff" stroke-width="3"/><circle cx="1300.7" cy="451.5" r="10.8" fill="#df84d1" stroke="#fff" stroke-width="3"/><circle cx="1319.6" cy="453.4" r="10.8" fill="#df84d1" stroke="#fff" stroke-width="3"/><circle cx="1298.3" cy="464.5" r="10.8" fill="#df84d1" stroke="#fff" stroke-width="3"/><circle cx="1319.6" cy="205.2" r="10.8" fill="#d2896d" stroke="#fff" stroke-width="3"/><circle cx="1340.9" cy="198.1" r="10.8" fill="#d2896d" stroke="#fff" stroke-width="3"/><circle cx="1335.4" cy="212.3" r="10.8" fill="#d2896d" stroke="#fff" stroke-width="3"/><circle cx="1370.9" cy="229.0" r="10.8" fill="#ebab63" stroke="#fff" stroke-width="3"/><circle cx="1392.2" cy="222.6" r="10.8" fill="#ebab63" stroke="#fff" stroke-width="3"/><circle cx="1400.9" cy="217.1" r="10.8" fill="#ebab63" stroke="#fff" stroke-width="3"/><circle cx="1418.3" cy="209.2" r="10.8" fill="#ebab63" stroke="#fff" stroke-width="3"/><circle cx="1117.8" cy="492.5" r="10.8" fill="#ae8f8f" stroke="#fff" stroke-width="3"/><circle cx="1127.2" cy="496.6" r="10.8" fill="#ae8f8f" stroke="#fff" stroke-width="3"/><circle cx="1127.2" cy="519.0" r="10.8" fill="#ae8f8f" stroke="#fff" stroke-width="3"/><circle cx="1116.3" cy="536.9" r="10.8" fill="#ae8f8f" stroke="#fff" stroke-width="3"/><circle cx="1153.8" cy="557.5" r="10.8" fill="#ae8f8f" stroke="#fff" stroke-width="3"/><circle cx="1172.5" cy="563.8" r="10.8" fill="#ae8f8f" stroke="#fff" stroke-width="3"/><circle cx="1436.6" cy="419.7" r="10.8" fill="#ae8f8f" stroke="#fff" stroke-width="3"/><circle cx="1456.0" cy="423.1" r="10.8" fill="#ae8f8f" stroke="#fff" stroke-width="3"/><circle cx="1479.4" cy="462.2" r="10.8" fill="#ae8f8f" stroke="#fff" stroke-width="3"/><circle cx="1445.3" cy="544.0" r="10.8" fill="#ae8f8f" stroke="#fff" stroke-width="3"/><circle cx="1451.0" cy="347.5" r="10.8" fill="#c44eb3" stroke="#fff" stroke-width="3"/><circle cx="1309.4" cy="431.8" r="10.8" fill="#8f98d8" stroke="#fff" stroke-width="3"/><circle cx="1086.6" cy="275.4" r="10.8" fill="#000" stroke="#fff" stroke-width="3"/><circle cx="1124.1" cy="299.1" r="10.8" fill="#000" stroke="#fff" stroke-width="3"/><circle cx="1142.7" cy="319.2" r="10.8" fill="#000" stroke="#fff" stroke-width="3"/><rect x="1107.6" y="171.8" width="24.500" height="24.500" fill="#555" stroke="#000" stroke-width="1.800"/><text x="1119.9" y="189.0" font-size="13.500" font-weight="bold" fill="#fff" text-anchor="middle">T</text><rect x="1163.0" y="298.0" width="24.500" height="24.500" fill="#4a4a4a" stroke="#000" stroke-width="1.800"/><circle cx="1175.2" cy="310.2" r="9.500" fill="#000"/><text x="1175.3" y="315.2" font-size="13.500" font-weight="bold" fill="#fff" text-anchor="middle">T</text><rect x="1396.0" y="407.0" width="24.500" height="24.500" fill="#4a4f57" stroke="#000" stroke-width="1.800"/><circle cx="1408.2" cy="419.2" r="9.500" fill="#1c3850"/><text x="1408.3" y="424.2" font-size="13.500" font-weight="bold" fill="#fff" text-anchor="middle">T</text></svg>
<div class="abs" style="left:730px;top:167px;width:338px;height:125px;border-radius:11px;background:#fff;box-shadow:0 3px 14px rgba(0,0,0,.4)"></div><div class="abs" style="left:890.0px;top:278.5px;width:17px;height:17px;background:#fff;transform:rotate(45deg)"></div><div class="abs" style="left:730px;top:167px;width:338px;height:51px;border-radius:11px 11px 0 0;background:#539ed8"></div>
<div class="abs" style="left:0;top:0;width:5px;height:510px;background:linear-gradient(90deg,rgba(0,0,0,.11),rgba(0,0,0,0))"></div><div class="abs" style="left:-460px;top:-62px;width:1920px;height:1077px"><span class="t" style="left:1197.0px;top:239.6px;font-size:12.50px;font-weight:bold;color:#fff;letter-spacing:1.153px;-webkit-text-stroke:.4px #fff;">BILL'S</span><span class="t" style="left:1197.0px;top:257.7px;font-size:12.50px;font-weight:bold;color:#fff;letter-spacing:1.033px;-webkit-text-stroke:.4px #fff;">STORE</span><span class="t" style="left:1274.5px;top:247.6px;font-size:12.80px;font-weight:bold;color:#fff;letter-spacing:0.348px;">AUTO_20230825_213</span><svg style="left:1420px;top:235px" width="105" height="32" viewBox="1420 235 105 32"><path fill="none" stroke="#25292e" stroke-width="1.700" d="M1432 249.400l-5 4.800 5 4.800M1466.6 249.4l5 4.8-5 4.8"/><path fill="none" stroke="#c9ced4" stroke-width="2.1" d="M1511 238l9 9M1520 238l-9 9"/><path fill="#fff" d="M1491 245.600a6.800 6.800 0 0 1 4.200 12.100c-.7.700-.9 1.500-.9 2.400h-6.600c0-.9-.2-1.700-.9-2.400a6.800 6.800 0 0 1 4.200-12.100zM1487.900 261.300h6.200v2.300h-6.200z"/></svg><span class="t" style="left:1204.0px;top:290.8px;font-size:10.80px;font-weight:bold;color:#5c5f6e;letter-spacing:-0.115px;">EQ CODE</span><span class="t" style="left:1262.0px;top:290.8px;font-size:10.80px;font-weight:bold;color:#5c5f6e;letter-spacing:0.250px;">BOUNDARY</span><div class="abs" style="left:1199px;top:319px;width:142px;height:26px;border-radius:2.500px;background:#6b6f7c"></div><span class="t" style="left:1208.5px;top:325.1px;font-size:13.60px;font-weight:bold;color:#fff;letter-spacing:0.087px;">View Route Details</span><div class="abs" style="left:1871px;top:72.500px;width:40px;height:160px;background:#fff;box-shadow:0 1px 4px rgba(0,0,0,.3)"></div><div class="abs" style="left:1871px;top:244.500px;width:40px;height:122.500px;background:#fff;box-shadow:0 1px 4px rgba(0,0,0,.3)"></div><svg style="left:1882.5px;top:83.7px" width="17.5" height="16.7" viewBox="3 2 18 19.07" preserveAspectRatio="none"><path fill="#1d2025" d="M11.99 18.54l-7.37-5.73L3 14.07l9 7 9-7-1.63-1.27-7.38 5.74zM12 16l7.36-5.73L21 9l-9-7-9 7 1.63 1.27L12 16z" /></svg><svg style="left:1880px;top:120px" width="22" height="60" viewBox="1880 120 22 60"><path fill="none" stroke="#1d2025" stroke-width="1.700" d="M1883.300 131h15.400M1891 123.300v15.400M1883.300 170.800h15.400"/></svg><svg style="left:1881.3px;top:201.2px" width="19.3" height="19.3" viewBox="2 2 20 20" preserveAspectRatio="none"><path fill="#1d2025" d="M12 2C6.48 2 2 6.48 2 12s4.48 10 10 10 10-4.48 10-10S17.52 2 12 2zm1 15h-2v-6h2v6zm0-8h-2V7h2v2z" /></svg><svg style="left:1880px;top:254px" width="22" height="22" viewBox="1880 254 22 22"><path fill="none" stroke="#1d2025" stroke-width="1.300" d="M1883.300 256.700H1896.800V263.600H1890V270.200H1883.300z"/><g fill="#fff" stroke="#1d2025" stroke-width="1"><circle cx="1883.300" cy="256.700" r="1.500"/><circle cx="1890" cy="256.700" r="1.500"/><circle cx="1896.800" cy="256.700" r="1.500"/><circle cx="1883.300" cy="263.600" r="1.500"/><circle cx="1890" cy="263.600" r="1.500"/><circle cx="1896.800" cy="263.600" r="1.500"/><circle cx="1883.300" cy="270.200" r="1.500"/><circle cx="1890" cy="270.200" r="1.500"/></g><path fill="#1d2025" stroke="#fff" stroke-width=".500" d="M1893 266.800l7.800 2.900-3.300 1.300 1.900 2.600-1.300.9-1.900-2.600-2.200 2.400z"/></svg><svg style="left:1882px;top:296px" width="18" height="18" viewBox="1882 296 18 18"><path fill="none" stroke="#1d2025" stroke-width="1.200" d="M1885 310.300L1886.800 300.100 1896.800 300.400"/><circle cx="1885" cy="310.300" r="1.800" fill="#1d2025"/><circle cx="1886.800" cy="300.100" r="1.700" fill="#1d2025"/><circle cx="1896.800" cy="300.400" r="1.700" fill="#1d2025"/></svg><svg style="left:1881.9px;top:340.0px" width="18.1" height="12.3" viewBox="1 4.5 22 15" preserveAspectRatio="none"><path fill="#1d2025" d="M12 4.5C7 4.5 2.73 7.61 1 12c1.73 4.39 6 7.5 11 7.5s9.27-3.11 11-7.5c-1.73-4.39-6-7.5-11-7.5zM12 17c-2.76 0-5-2.24-5-5s2.24-5 5-5 5 2.24 5 5-2.24 5-5 5zm0-8c-1.66 0-3 1.34-3 3s1.34 3 3 3 3-1.34 3-3-1.34-3-3-3z" /></svg><svg style="left:1796px;top:546px" width="124" height="26" viewBox="1796 546 124 26" font-family="Liberation Sans,sans-serif"><rect x="1822" y="547" width="98" height="25" fill="#fff" opacity=".7"/><path fill="#0d5a9a" d="M1801.800 552.600L1817.800 560.300 1802.200 568.400Q1799.600 560.500 1801.800 552.600z"/><path stroke="#fff" stroke-width=".9" fill="none" d="M1803 556.500c3 1.500 6 2 9 2.200M1802.500 563c3.500.5 7-.5 10-2M1806.500 555c-1.500 3.500-1.500 7.500 0 11"/><circle cx="1808.500" cy="560.300" r="2" fill="none" stroke="#fff" stroke-width=".8"/><circle cx="1815.700" cy="566.300" r="1.100" fill="#0d5a9a"/><text x="1818.300" y="566.100" font-size="17" font-weight="bold" fill="#0d5a9a" stroke="#0d5a9a" stroke-width=".5" textLength="51.200" lengthAdjust="spacingAndGlyphs">Trimble.</text><text x="1872.200" y="566.100" font-size="17" font-weight="bold" fill="#2fa0e0" stroke="#2fa0e0" stroke-width=".5" textLength="43.300" lengthAdjust="spacingAndGlyphs">MAPS</text></svg></div>
</div>
<div id="bot"><div id="tabs"></div><div class="abs" style="left:0;top:53px;width:742px;height:2px;background:#c5c8d4"></div><div class="abs" style="left:172px;top:51px;width:271px;height:3px;background:#217cbb"></div><div class="abs" style="left:78px;top:122px;width:1306px;height:300px;background:#fff;box-shadow:0 1px 3px rgba(0,0,0,.22)"></div></div><svg style="left:500px;top:586px" width="24" height="25" viewBox="500 586 24 25"><path fill="#25292e" d="M506.900 587.100h3.300v2.300h3.300v-2.300h3.300v9.300h-9.900z"/><path fill="none" stroke="#25292e" stroke-width="1.9" d="M511.800 598.300v7M507.300 601.300l4.500 4.300 4.500-4.300M501.500 604.600v4.100h20.700v-4.100"/></svg><span class="t" style="left:534.4px;top:588.9px;font-size:16.40px;color:#25292e;letter-spacing:-1.594px;-webkit-text-stroke:.3px;">ORDERS</span><svg style="left:671px;top:586px" width="25" height="25" viewBox="671 586 25 25"><path fill="none" stroke="#217cbb" stroke-width="1.15" d="M673.900 604.100c4.500-1.600 3.800-4.800 2.200-7.300-1.600-2.600-1.100-4.100.100-5.300 2.300-3.600 8.600-4.700 12.600 0"/><circle cx="673.900" cy="604.100" r="1.900" fill="#217cbb"/><circle cx="676.200" cy="591.500" r="1.900" fill="#217cbb"/><circle cx="688.800" cy="591.500" r="1.900" fill="#217cbb"/><path fill="none" stroke="#217cbb" stroke-width="1.700" d="M679.600 605.800v3.600M684.200 600.600v8.800M688.800 602.300v7.100M693.400 596.600v12.800"/></svg><span class="t" style="left:705.7px;top:588.9px;font-size:16.40px;color:#217cbb;letter-spacing:-0.776px;-webkit-text-stroke:.3px;">ROUTE COMPARISON</span><svg style="left:944px;top:589px" width="20" height="20" viewBox="944 589 20 20"><path fill="none" stroke="#cbccd0" stroke-width="3.600" stroke-linecap="round" d="M946.600 603.500v2.500M953.700 591.500v14.500M960.800 598v8"/></svg><span class="t" style="left:975.5px;top:588.9px;font-size:16.40px;color:#cbccd0;letter-spacing:-0.487px;">SOLUTION COMPARISON</span><svg style="left:1876px;top:593px" width="21" height="14" viewBox="1876 593 21 14"><path fill="none" stroke="#111" stroke-width="2.500" d="M1878.800 596.200l7.500 7.300 7.500-7.300"/></svg><svg style="left:489.4px;top:647.0px" width="16.2" height="16.4" viewBox="4.03 4 15.93 16" preserveAspectRatio="none"><path fill="#25292e" d="M4.25 5.61C6.27 8.2 10 13 10 13v6c0 .55.45 1 1 1h2c.55 0 1-.45 1-1v-6s3.72-4.8 5.74-7.39A.998.998 0 0 0 18.95 4H5.04c-.83 0-1.3.95-.79 1.61z" /></svg><svg style="left:524px;top:647px" width="19" height="15" viewBox="524 647 19 15"><path fill="none" stroke="#25292e" stroke-width="1.500" d="M524.600 649.700h17.400M524.600 654.500h11.600M524.600 659.300h5.800"/></svg><svg style="left:557px;top:647px" width="17" height="16" viewBox="557 647 17 16"><path fill="none" stroke="#25292e" stroke-width="1.500" d="M560.500 662v-13M557.800 651.700l2.700-3 2.700 3M565.500 650.500h2.500M565.500 654.500h4.300M565.500 658.500h6.800"/></svg><span class="t" style="left:578.8px;top:646.5px;font-size:16.00px;color:#363b42;letter-spacing:0.330px;">Name</span><svg style="left:0;top:0" width="1920" height="1077" viewBox="0 0 1920 1077"><path d="M615.5 720V898M657.5 720V898M700.5 720V898M742.5 720V898M784.5 720V898M826.5 720V898M868.5 720V898M910.5 720V898M953.5 720V898M995.5 720V898M1037.5 720V898M1079.5 720V898M1121.5 720V898M1163.5 720V898M1206.5 720V898M1248.5 720V898M1290.5 720V898M1332.5 720V898M1374.5 720V898M1416.5 720V898M1459.5 720V898M1501.5 720V898M1543.5 720V898M1585.5 720V898M1627.5 720V898M1669.5 720V898M1712.5 720V898M1754.5 720V898M1796.5 720V898" stroke="#e7e7e7" stroke-width="1" fill="none"/><path d="M599 720.500H1813M599 809.500H1813M599 898.500H1813" stroke="#e4e4e4" stroke-width="1" fill="none"/><path fill="#74bbf0" d="M599.2 898.300V885.0q0-4.5 4.5-4.5h23.8q4.5 0 4.5 4.5V898.300z"/><path fill="#41bfce" d="M641.4 898.300V885.0q0-4.5 4.5-4.5h23.8q4.5 0 4.5 4.5V898.300z"/><path fill="#b3a43e" d="M683.5 898.300V849.3q0-4.5 4.5-4.5h23.8q4.5 0 4.5 4.5V898.300z"/><path fill="#ebab63" d="M725.7 898.300V867.2q0-4.5 4.5-4.5h23.8q4.5 0 4.5 4.5V898.300z"/><path fill="#d2896d" d="M767.9 898.300V795.9q0-4.5 4.5-4.5h23.8q4.5 0 4.5 4.5V898.300z"/><path fill="#ae8f8f" d="M810.1 898.300V724.6q0-4.5 4.5-4.5h23.8q4.5 0 4.5 4.5V898.300z"/><path fill="#df84d1" d="M852.2 898.300V760.2q0-4.5 4.5-4.5h23.8q4.5 0 4.5 4.5V898.300z"/><path fill="#8f98d8" d="M894.4 898.300V813.7q0-4.5 4.5-4.5h23.8q4.5 0 4.5 4.5V898.300z"/><path fill="#539ed8" d="M936.6 898.300V813.7q0-4.5 4.5-4.5h23.8q4.5 0 4.5 4.5V898.300z"/><path fill="#74bbf0" d="M978.7 898.300V778.1q0-4.5 4.5-4.5h23.8q4.5 0 4.5 4.5V898.300z"/><path fill="#41bfce" d="M1020.9 898.300V778.1q0-4.5 4.5-4.5h23.8q4.5 0 4.5 4.5V898.300z"/><path fill="#74c680" d="M1063.1 898.300V795.9q0-4.5 4.5-4.5h23.8q4.5 0 4.5 4.5V898.300z"/><path fill="#b3a43e" d="M1105.2 898.300V760.2q0-4.5 4.5-4.5h23.8q4.5 0 4.5 4.5V898.300z"/><path fill="#ebab63" d="M1147.4 898.300V813.7q0-4.5 4.5-4.5h23.8q4.5 0 4.5 4.5V898.300z"/><path fill="#d2896d" d="M1189.6 898.300V813.7q0-4.5 4.5-4.5h23.8q4.5 0 4.5 4.5V898.300z"/><path fill="#ae8f8f" d="M1231.8 898.300V795.9q0-4.5 4.5-4.5h23.8q4.5 0 4.5 4.5V898.300z"/><path fill="#df84d1" d="M1273.9 898.300V831.5q0-4.5 4.5-4.5h23.8q4.5 0 4.5 4.5V898.300z"/><path fill="#d2896d" d="M1316.1 898.300V813.7q0-4.5 4.5-4.5h23.8q4.5 0 4.5 4.5V898.300z"/><path fill="#8f98d8" d="M1358.3 898.300V778.1q0-4.5 4.5-4.5h23.8q4.5 0 4.5 4.5V898.300z"/><path fill="#539ed8" d="M1400.4 898.300V760.2q0-4.5 4.5-4.5h23.8q4.5 0 4.5 4.5V898.300z"/><path fill="#74c680" d="M1442.6 898.300V867.2q0-4.5 4.5-4.5h23.8q4.5 0 4.5 4.5V898.300z"/><path fill="#b3a43e" d="M1484.8 898.300V760.2q0-4.5 4.5-4.5h23.8q4.5 0 4.5 4.5V898.300z"/><path fill="#ebab63" d="M1526.9 898.300V778.1q0-4.5 4.5-4.5h23.8q4.5 0 4.5 4.5V898.300z"/><path fill="#74bbf0" d="M1569.1 898.300V778.1q0-4.5 4.5-4.5h23.8q4.5 0 4.5 4.5V898.300z"/><path fill="#41bfce" d="M1611.3 898.300V778.1q0-4.5 4.5-4.5h23.8q4.5 0 4.5 4.5V898.300z"/><path fill="#ae8f8f" d="M1653.4 898.300V831.5q0-4.5 4.5-4.5h23.8q4.5 0 4.5 4.5V898.300z"/><path fill="#df84d1" d="M1695.6 898.300V760.2q0-4.5 4.5-4.5h23.8q4.5 0 4.5 4.5V898.300z"/><path fill="#8f98d8" d="M1737.8 898.300V867.2q0-4.5 4.5-4.5h23.8q4.5 0 4.5 4.5V898.300z"/><path fill="#539ed8" d="M1780.0 898.300V795.9q0-4.5 4.5-4.5h23.8q4.5 0 4.5 4.5V898.300z"/></svg><span class="t" style="left:603.7px;top:904.7px;font-size:13.60px;color:#363b42;letter-spacing:0.503px;">600</span><span class="t" style="left:645.9px;top:904.7px;font-size:13.60px;color:#363b42;letter-spacing:0.503px;">601</span><span class="t" style="left:688.0px;top:904.7px;font-size:13.60px;color:#363b42;letter-spacing:0.503px;">604</span><span class="t" style="left:730.2px;top:904.7px;font-size:13.60px;color:#363b42;letter-spacing:0.503px;">605</span><span class="t" style="left:772.4px;top:904.7px;font-size:13.60px;color:#363b42;letter-spacing:0.503px;">606</span><span class="t" style="left:814.6px;top:904.7px;font-size:13.60px;color:#363b42;letter-spacing:0.503px;">608</span><span class="t" style="left:856.7px;top:904.7px;font-size:13.60px;color:#363b42;letter-spacing:0.503px;">615</span><span class="t" style="left:898.9px;top:904.7px;font-size:13.60px;color:#363b42;letter-spacing:0.503px;">620</span><span class="t" style="left:941.1px;top:904.7px;font-size:13.60px;color:#363b42;letter-spacing:0.503px;">621</span><span class="t" style="left:983.2px;top:904.7px;font-size:13.60px;color:#363b42;letter-spacing:0.503px;">624</span><span class="t" style="left:1025.4px;top:904.7px;font-size:13.60px;color:#363b42;letter-spacing:0.503px;">629</span><span class="t" style="left:1067.6px;top:904.7px;font-size:13.60px;color:#363b42;letter-spacing:0.503px;">630</span><span class="t" style="left:1109.7px;top:904.7px;font-size:13.60px;color:#363b42;letter-spacing:0.503px;">631</span><span class="t" style="left:1151.9px;top:904.7px;font-size:13.60px;color:#363b42;letter-spacing:0.503px;">632</span><span class="t" style="left:1194.1px;top:904.7px;font-size:13.60px;color:#363b42;letter-spacing:0.503px;">635</span><span class="t" style="left:1236.2px;top:904.7px;font-size:13.60px;color:#363b42;letter-spacing:0.503px;">637</span><span class="t" style="left:1278.4px;top:904.7px;font-size:13.60px;color:#363b42;letter-spacing:0.503px;">641</span><span class="t" style="left:1320.6px;top:904.7px;font-size:13.60px;color:#363b42;letter-spacing:0.503px;">642</span><span class="t" style="left:1362.8px;top:904.7px;font-size:13.60px;color:#363b42;letter-spacing:0.503px;">643</span><span class="t" style="left:1404.9px;top:904.7px;font-size:13.60px;color:#363b42;letter-spacing:0.503px;">649</span><span class="t" style="left:1447.1px;top:904.7px;font-size:13.60px;color:#363b42;letter-spacing:0.503px;">656</span><span class="t" style="left:1489.3px;top:904.7px;font-size:13.60px;color:#363b42;letter-spacing:0.503px;">657</span><span class="t" style="left:1531.4px;top:904.7px;font-size:13.60px;color:#363b42;letter-spacing:0.503px;">659</span><span class="t" style="left:1573.6px;top:904.7px;font-size:13.60px;color:#363b42;letter-spacing:0.503px;">660</span><span class="t" style="left:1615.8px;top:904.7px;font-size:13.60px;color:#363b42;letter-spacing:0.503px;">662</span><span class="t" style="left:1657.9px;top:904.7px;font-size:13.60px;color:#363b42;letter-spacing:0.503px;">666</span><span class="t" style="left:1700.1px;top:904.7px;font-size:13.60px;color:#363b42;letter-spacing:0.503px;">679</span><span class="t" style="left:1742.3px;top:904.7px;font-size:13.60px;color:#363b42;letter-spacing:0.503px;">681</span><span class="t" style="left:1784.5px;top:904.7px;font-size:13.60px;color:#363b42;letter-spacing:0.503px;">683</span><span class="t" style="left:568.8px;top:713.8px;font-size:13.60px;color:#363b42;letter-spacing:0.236px;">10</span><span class="t" style="left:576.3px;top:802.8px;font-size:13.60px;color:#363b42;">5</span><span class="t" style="left:576.3px;top:891.8px;font-size:13.60px;color:#363b42;">0</span><svg style="left:482px;top:835px" width="16" height="20" viewBox="482 835 16 20"><path fill="none" stroke="#111" stroke-width="2.500" d="M493.800 837.300l-7.500 7.500 7.500 7.500"/></svg><svg style="left:1886px;top:835px" width="16" height="20" viewBox="1886 835 16 20"><path fill="none" stroke="#111" stroke-width="2.500" d="M1889.700 837.300l7.500 7.500-7.500 7.500"/></svg><div class="abs" style="left:1129px;top:945px;width:124px;height:36px;border:1px solid #dcdce0;border-radius:2px;background:#fff"></div><span class="t" style="left:1143.0px;top:955.9px;font-size:14.00px;color:#6b6f7c;letter-spacing:-0.060px;">Stops</span><svg style="left:1224px;top:956px" width="16" height="12" viewBox="1224 956 16 12"><path fill="none" stroke="#555a66" stroke-width="1.700" d="M1226.300 959.500l5.700 5.700 5.700-5.700"/></svg><div class="abs" style="left:1146.500px;top:1016.500px;width:18px;height:18px;border-radius:50%;background:#b5b5b5;border:2px solid #a0a0a0"></div><div class="abs" style="left:1181.500px;top:1016.500px;width:18px;height:18px;border-radius:50%;background:#fff;border:2px solid #d2d2d2"></div><div class="abs" style="left:1216.500px;top:1016.500px;width:18px;height:18px;border-radius:50%;background:#fff;border:2px solid #d2d2d2"></div><div id="foot"></div><div class="abs" style="left:208px;top:1057px;width:1px;height:20px;background:#d4d5dc"></div><span class="t" style="left:11.5px;top:1059.5px;font-size:14.00px;color:#363b42;letter-spacing:0.055px;">Copyright © 2023 Trimble Inc.</span><span class="t" style="left:217.0px;top:1059.5px;font-size:14.00px;color:#363b42;letter-spacing:-0.086px;">v2023.08.22-b269a1a08</span><span class="t" style="left:1094.0px;top:1059.5px;font-size:14.00px;font-weight:bold;color:#25292e;letter-spacing:-0.006px;">Summary Statistics:</span><span class="t" style="left:1235.5px;top:1059.5px;font-size:14.00px;color:#363b42;letter-spacing:-0.021px;">Routes: 29</span><span class="t" style="left:1309.5px;top:1059.5px;font-size:14.00px;color:#363b42;letter-spacing:-0.044px;">Stops: 160</span><span class="t" style="left:1383.0px;top:1059.5px;font-size:14.00px;color:#363b42;letter-spacing:0.098px;">Orders: 164</span><span class="t" style="left:1465.0px;top:1059.5px;font-size:14.00px;color:#363b42;letter-spacing:0.101px;">Unloaded Orders: 1</span><span class="t" style="left:1596.0px;top:1059.5px;font-size:14.00px;color:#363b42;letter-spacing:0.098px;">Miles: 11,789</span><span class="t" style="left:1686.5px;top:1059.5px;font-size:14.00px;color:#363b42;letter-spacing:0.070px;">Hours: 350.9</span><span class="t" style="left:1774.5px;top:1059.5px;font-size:14.00px;color:#363b42;letter-spacing:-0.129px;">Cost: $24,132</span><svg style="left:1890.0px;top:1059.3px" width="19.0" height="12.7" viewBox="0 4 24 16" preserveAspectRatio="none"><path fill="#0b5ea6" d="M19.35 10.04C18.67 6.59 15.64 4 12 4 9.11 4 6.6 5.64 5.35 8.04 2.34 8.36 0 10.91 0 14c0 3.31 2.69 6 6 6h13c2.76 0 5-2.24 5-5 0-2.64-2.05-4.78-4.65-4.96z" /></svg>
</body></html>
